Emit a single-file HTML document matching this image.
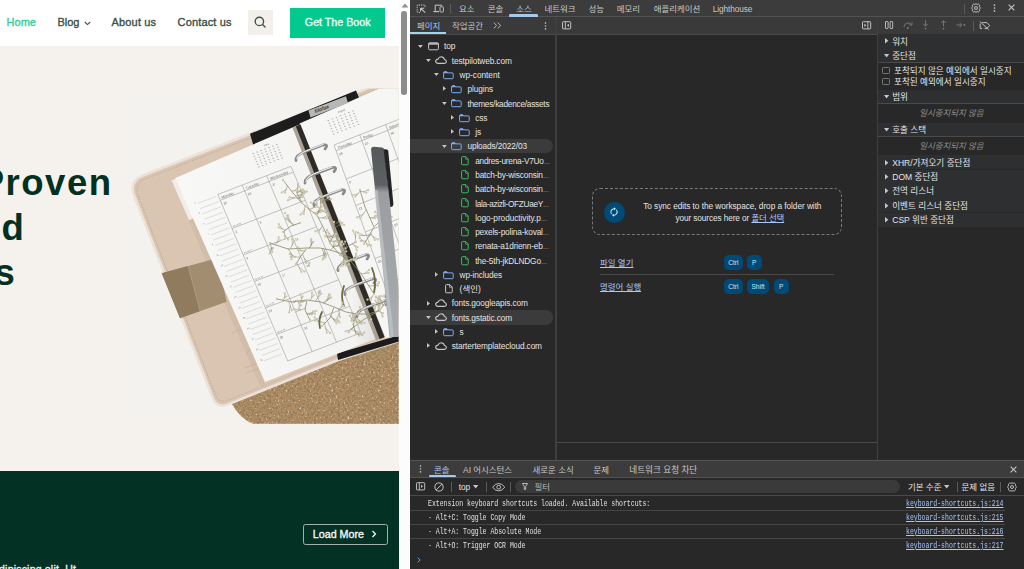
<!DOCTYPE html><html lang="ko"><head><meta charset="utf-8"><title>Productivity</title><style>
*{box-sizing:border-box}
html,body{margin:0;padding:0}
body{width:1024px;height:569px;overflow:hidden;position:relative;background:#282828;font-family:"Liberation Sans","Noto Sans CJK KR",sans-serif}
.a{position:absolute}
.t{position:absolute;white-space:nowrap;height:12px;line-height:12px;color:#e3e3e3}
.l{font-size:8.3px;letter-spacing:-0.12px}
.k{font-size:8.45px}
.k2{font-size:8.58px}
.m{font-family:"Liberation Mono","Noto Sans CJK KR",monospace;font-size:8.8px;transform-origin:0 50%;transform:scaleX(0.7386)}
.nav{position:absolute;white-space:nowrap;font-size:11px;height:14px;line-height:14px;color:#3a4f48;-webkit-text-stroke:0.35px currentColor}
.h1{position:absolute;white-space:nowrap;font-weight:bold;font-size:36.5px;line-height:44px;height:44px;color:#03301f;letter-spacing:-0.3px}
svg{position:absolute;overflow:visible}
.key{position:absolute;background:#004a77;color:#c2e7ff;border-radius:5px;font-size:6.6px;height:15px;line-height:15px;text-align:center}
.lnk{color:#a8c7fa;text-decoration:underline}
</style></head><body>
<div class="a" id="site" style="left:0;top:0;width:399.5px;height:569px;overflow:hidden;background:#f5f2ed">
<svg style="left:0;top:0" width="400" height="569" viewBox="0 0 400 569"><defs><clipPath id="pc"><rect x="128" y="88.4" width="270.6" height="335.4"/></clipPath><filter id="cork" x="0" y="0" width="100%" height="100%"><feTurbulence type="fractalNoise" baseFrequency="0.42" numOctaves="3" seed="7"/><feColorMatrix type="matrix" values="0 0 0 0 0.30  0 0 0 0 0.20  0 0 0 0 0.10  3.2 3.2 0 0 -2.95"/><feComposite in2="SourceGraphic" operator="in"/></filter><filter id="cork2" x="0" y="0" width="100%" height="100%"><feTurbulence type="fractalNoise" baseFrequency="0.5" numOctaves="2" seed="21"/><feColorMatrix type="matrix" values="0 0 0 0 0.80  0 0 0 0 0.68  0 0 0 0 0.50  2.4 2.4 0 0 -2.75"/><feComposite in2="SourceGraphic" operator="in"/></filter><linearGradient id="pg" x1="0" y1="0" x2="1" y2="0"><stop offset="0" stop-color="#f8f8f7"/><stop offset="0.85" stop-color="#f3f3f2"/><stop offset="1" stop-color="#dddcda"/></linearGradient><linearGradient id="pen" x1="0" y1="0" x2="0" y2="1"><stop offset="0" stop-color="#56595b"/><stop offset="0.2" stop-color="#5e6163"/><stop offset="0.24" stop-color="#9b9ea0"/><stop offset="1" stop-color="#a9acae"/></linearGradient><filter id="bl"><feGaussianBlur stdDeviation="0.45"/></filter></defs><g clip-path="url(#pc)"><rect x="128" y="88.4" width="271" height="336" fill="#f4f2ee"/><path d="M228 400 L338 356 L399 336 L399 424 L253 424 Q240 418 232.6 405Z" fill="#b08d65"/><path d="M228 400 L338 356 L399 336 L399 424 L253 424 Q240 418 232.6 405Z" fill="#b3906a" filter="url(#cork)"/><path d="M228 400 L338 356 L399 336 L399 424 L253 424 Q240 418 232.6 405Z" fill="#b3906a" filter="url(#cork2)"/><path d="M399 76 L143.4 175.2 Q128.5 181 134.3 196 L212.6 397.7 Q216.9 408.9 228 404.4 L338 360 L399 341 Z" fill="#dac5b2" stroke="#ebe3d9" stroke-width="2.6" stroke-linejoin="round"/><path d="M399 80.5 L145.5 178.8 Q133.8 183.6 138.2 195.6 L215.4 395 Q219 403.6 227.6 400.4 L338 356 L399 337" fill="none" stroke="#a8957f" stroke-width="0.5" stroke-dasharray="1.6 1.3"/><path d="M172 182 L178 180 L266 386 L261 388Z" fill="#d2bda9" filter="url(#bl)"/><path d="M250 133.8 L356 90.5 L360 100 L253.5 146Z" fill="#1d1d1d"/><path d="M337 353.6 L399 335.2 L399 341.6 L338 360Z" fill="#1b1b1b"/><path d="M232 334 q4 -5 9 -4 M246 355 q3 -7 8 -8 M244 368 l12 -4 M246 373 l12 -4" fill="none" stroke="#cbb39d" stroke-width="1"/><path d="M161.7 273.3 L216.7 258.3 L226.7 301.7 L180 318.3Z" fill="#a38d70"/><path d="M161.7 273.3 L188 266 L200 311 L180 318.3Z" fill="#917b5e"/><path d="M188 266 L200 311" stroke="#cdbca4" stroke-width="0.7" stroke-dasharray="1 1"/><path d="M171.5 180.5 L177 178.3 L194 218 L189 220.3Z" fill="#f1ede6"/><path d="M175.3 178 L299.5 124.5 L383 336 L265 382Z" fill="url(#pg)"/><path d="M299.5 123.6 L379.5 88.4 L400 88 L400 336 L384 338Z" fill="#f6f6f5"/><path d="M308.5 110.5 L346 96.2 L348 102.9 L310.5 117.6Z" fill="#b7b8b6"/><text transform="translate(315 113.4) rotate(-21) skewX(-12)" font-family="Liberation Sans,sans-serif" font-weight="bold" font-size="5.2" fill="#3a3a3a">filofax</text><g filter="url(#bl)"><path d="M217.8 194.5 L291.0 166.3" stroke="#8a8a88" stroke-width="0.5"/><path d="M220.2 200.3 L293.4 172.1" stroke="#8a8a88" stroke-width="0.5"/><path d="M232.1 228.5 L305.3 200.3" stroke="#8a8a88" stroke-width="0.5"/><path d="M243.2 255.0 L316.4 226.8" stroke="#8a8a88" stroke-width="0.5"/><path d="M254.3 281.5 L327.5 253.3" stroke="#8a8a88" stroke-width="0.5"/><path d="M265.4 308.0 L338.6 279.8" stroke="#8a8a88" stroke-width="0.5"/><path d="M276.5 334.5 L349.7 306.3" stroke="#8a8a88" stroke-width="0.5"/><path d="M287.7 361.0 L360.9 332.8" stroke="#8a8a88" stroke-width="0.5"/><path d="M217.8 194.5 L287.7 361.0" stroke="#8a8a88" stroke-width="0.5"/><path d="M242.2 185.1 L312.1 351.6" stroke="#8a8a88" stroke-width="0.5"/><path d="M266.6 175.7 L336.5 342.2" stroke="#8a8a88" stroke-width="0.5"/><path d="M291.0 166.3 L360.9 332.8" stroke="#8a8a88" stroke-width="0.5"/><text transform="translate(221.9 198.8) rotate(-21)" font-family="Liberation Sans,sans-serif" font-size="3.6" fill="#6a6a68">Monday</text><text transform="translate(246.3 189.4) rotate(-21)" font-family="Liberation Sans,sans-serif" font-size="3.6" fill="#6a6a68">Tuesday</text><text transform="translate(270.7 180.0) rotate(-21)" font-family="Liberation Sans,sans-serif" font-size="3.6" fill="#6a6a68">Wednesday</text><text transform="translate(223.9 204.9) rotate(-21)" font-family="Liberation Sans,sans-serif" font-size="3.2" fill="#6a6a68">25</text><text transform="translate(248.3 195.5) rotate(-21)" font-family="Liberation Sans,sans-serif" font-size="3.2" fill="#6a6a68">26</text><text transform="translate(272.7 186.1) rotate(-21)" font-family="Liberation Sans,sans-serif" font-size="3.2" fill="#6a6a68">27</text><text transform="translate(235.7 233.1) rotate(-21)" font-family="Liberation Sans,sans-serif" font-size="3.2" fill="#6a6a68">2</text><text transform="translate(260.1 223.7) rotate(-21)" font-family="Liberation Sans,sans-serif" font-size="3.2" fill="#6a6a68">3</text><text transform="translate(284.5 214.3) rotate(-21)" font-family="Liberation Sans,sans-serif" font-size="3.2" fill="#6a6a68">4</text><text transform="translate(233.0 227.2) rotate(-21)" font-family="Liberation Sans,sans-serif" font-size="2.2" fill="#77777a">Week 26</text><text transform="translate(246.8 259.6) rotate(-21)" font-family="Liberation Sans,sans-serif" font-size="3.2" fill="#6a6a68">9</text><text transform="translate(271.2 250.2) rotate(-21)" font-family="Liberation Sans,sans-serif" font-size="3.2" fill="#6a6a68">10</text><text transform="translate(295.6 240.8) rotate(-21)" font-family="Liberation Sans,sans-serif" font-size="3.2" fill="#6a6a68">11</text><text transform="translate(244.1 253.7) rotate(-21)" font-family="Liberation Sans,sans-serif" font-size="2.2" fill="#77777a">Week 27</text><text transform="translate(258.0 286.1) rotate(-21)" font-family="Liberation Sans,sans-serif" font-size="3.2" fill="#6a6a68">16</text><text transform="translate(282.4 276.7) rotate(-21)" font-family="Liberation Sans,sans-serif" font-size="3.2" fill="#6a6a68">17</text><text transform="translate(306.8 267.3) rotate(-21)" font-family="Liberation Sans,sans-serif" font-size="3.2" fill="#6a6a68">18</text><text transform="translate(255.2 280.2) rotate(-21)" font-family="Liberation Sans,sans-serif" font-size="2.2" fill="#77777a">Week 28</text><text transform="translate(269.1 312.6) rotate(-21)" font-family="Liberation Sans,sans-serif" font-size="3.2" fill="#6a6a68">23</text><text transform="translate(293.5 303.2) rotate(-21)" font-family="Liberation Sans,sans-serif" font-size="3.2" fill="#6a6a68">24</text><text transform="translate(317.9 293.8) rotate(-21)" font-family="Liberation Sans,sans-serif" font-size="3.2" fill="#6a6a68">25</text><text transform="translate(266.3 306.7) rotate(-21)" font-family="Liberation Sans,sans-serif" font-size="2.2" fill="#77777a">Week 29</text><text transform="translate(280.2 339.1) rotate(-21)" font-family="Liberation Sans,sans-serif" font-size="3.2" fill="#6a6a68">30</text><text transform="translate(304.6 329.7) rotate(-21)" font-family="Liberation Sans,sans-serif" font-size="3.2" fill="#6a6a68">31</text><text transform="translate(329.0 320.3) rotate(-21)" font-family="Liberation Sans,sans-serif" font-size="3.2" fill="#6a6a68"></text><text transform="translate(277.4 333.2) rotate(-21)" font-family="Liberation Sans,sans-serif" font-size="2.2" fill="#77777a">Week 30</text><path d="M197.8 203.4 L216.3 196.4" stroke="#a9a9a7" stroke-width="0.35"/><text transform="translate(194.7 203.8) rotate(-21)" font-family="Liberation Sans,sans-serif" font-size="2.2" fill="#77777a">1</text><path d="M200.0 208.7 L218.5 201.7" stroke="#a9a9a7" stroke-width="0.35"/><path d="M202.2 213.9 L220.7 206.9" stroke="#a9a9a7" stroke-width="0.35"/><text transform="translate(199.1 214.3) rotate(-21)" font-family="Liberation Sans,sans-serif" font-size="2.2" fill="#77777a">3</text><path d="M204.4 219.2 L222.9 212.2" stroke="#a9a9a7" stroke-width="0.35"/><path d="M206.6 224.4 L225.1 217.4" stroke="#a9a9a7" stroke-width="0.35"/><text transform="translate(203.5 224.8) rotate(-21)" font-family="Liberation Sans,sans-serif" font-size="2.2" fill="#77777a">5</text><path d="M208.8 229.7 L227.3 222.7" stroke="#a9a9a7" stroke-width="0.35"/><path d="M211.0 234.9 L229.5 227.9" stroke="#a9a9a7" stroke-width="0.35"/><text transform="translate(207.9 235.3) rotate(-21)" font-family="Liberation Sans,sans-serif" font-size="2.2" fill="#77777a">7</text><path d="M213.2 240.2 L231.7 233.2" stroke="#a9a9a7" stroke-width="0.35"/><path d="M215.4 245.4 L233.9 238.4" stroke="#a9a9a7" stroke-width="0.35"/><text transform="translate(212.3 245.8) rotate(-21)" font-family="Liberation Sans,sans-serif" font-size="2.2" fill="#77777a">9</text><path d="M217.6 250.7 L236.1 243.7" stroke="#a9a9a7" stroke-width="0.35"/><path d="M219.8 255.9 L238.3 248.9" stroke="#a9a9a7" stroke-width="0.35"/><text transform="translate(216.7 256.3) rotate(-21)" font-family="Liberation Sans,sans-serif" font-size="2.2" fill="#77777a">11</text><path d="M222.0 261.1 L240.5 254.1" stroke="#a9a9a7" stroke-width="0.35"/><path d="M224.2 266.4 L242.7 259.4" stroke="#a9a9a7" stroke-width="0.35"/><text transform="translate(221.1 266.8) rotate(-21)" font-family="Liberation Sans,sans-serif" font-size="2.2" fill="#77777a">13</text><path d="M226.4 271.6 L244.9 264.6" stroke="#a9a9a7" stroke-width="0.35"/><path d="M228.6 276.9 L247.1 269.9" stroke="#a9a9a7" stroke-width="0.35"/><text transform="translate(225.5 277.3) rotate(-21)" font-family="Liberation Sans,sans-serif" font-size="2.2" fill="#77777a">15</text><path d="M230.8 282.1 L249.3 275.1" stroke="#a9a9a7" stroke-width="0.35"/><path d="M233.0 287.4 L251.5 280.4" stroke="#a9a9a7" stroke-width="0.35"/><text transform="translate(229.9 287.8) rotate(-21)" font-family="Liberation Sans,sans-serif" font-size="2.2" fill="#77777a">17</text><path d="M235.2 292.6 L253.7 285.6" stroke="#a9a9a7" stroke-width="0.35"/><path d="M237.4 297.9 L255.9 290.9" stroke="#a9a9a7" stroke-width="0.35"/><text transform="translate(234.3 298.3) rotate(-21)" font-family="Liberation Sans,sans-serif" font-size="2.2" fill="#77777a">19</text><path d="M239.6 303.1 L258.1 296.1" stroke="#a9a9a7" stroke-width="0.35"/><path d="M241.8 308.4 L260.3 301.4" stroke="#a9a9a7" stroke-width="0.35"/><text transform="translate(238.7 308.8) rotate(-21)" font-family="Liberation Sans,sans-serif" font-size="2.2" fill="#77777a">21</text><path d="M244.0 313.6 L262.5 306.6" stroke="#a9a9a7" stroke-width="0.35"/><path d="M246.2 318.9 L264.7 311.9" stroke="#a9a9a7" stroke-width="0.35"/><text transform="translate(243.1 319.3) rotate(-21)" font-family="Liberation Sans,sans-serif" font-size="2.2" fill="#77777a">23</text><path d="M248.4 324.1 L266.9 317.1" stroke="#a9a9a7" stroke-width="0.35"/><path d="M250.6 329.4 L269.1 322.4" stroke="#a9a9a7" stroke-width="0.35"/><text transform="translate(247.5 329.8) rotate(-21)" font-family="Liberation Sans,sans-serif" font-size="2.2" fill="#77777a">25</text><path d="M252.8 334.6 L271.3 327.6" stroke="#a9a9a7" stroke-width="0.35"/><path d="M255.0 339.9 L273.5 332.9" stroke="#a9a9a7" stroke-width="0.35"/><text transform="translate(251.9 340.3) rotate(-21)" font-family="Liberation Sans,sans-serif" font-size="2.2" fill="#77777a">27</text><path d="M257.2 345.1 L275.7 338.1" stroke="#a9a9a7" stroke-width="0.35"/><path d="M259.4 350.4 L277.9 343.4" stroke="#a9a9a7" stroke-width="0.35"/><text transform="translate(256.3 350.8) rotate(-21)" font-family="Liberation Sans,sans-serif" font-size="2.2" fill="#77777a">29</text><path d="M261.6 355.6 L280.1 348.6" stroke="#a9a9a7" stroke-width="0.35"/><path d="M263.8 360.9 L282.3 353.9" stroke="#a9a9a7" stroke-width="0.35"/><text transform="translate(260.7 361.3) rotate(-21)" font-family="Liberation Sans,sans-serif" font-size="2.2" fill="#77777a">31</text><text transform="translate(264.0 146.5) rotate(-21)" font-family="Liberation Sans,sans-serif" font-size="2.6" fill="#6a6a68">June</text><rect x="252.5" y="153.0" width="1.6" height="1" fill="#b2b2b0"/><rect x="256.4" y="151.5" width="1.6" height="1" fill="#b2b2b0"/><rect x="260.3" y="150.0" width="1.6" height="1" fill="#b2b2b0"/><rect x="264.2" y="148.5" width="1.6" height="1" fill="#b2b2b0"/><rect x="268.1" y="147.0" width="1.6" height="1" fill="#b2b2b0"/><rect x="272.0" y="145.5" width="1.6" height="1" fill="#b2b2b0"/><rect x="275.9" y="144.0" width="1.6" height="1" fill="#b2b2b0"/><rect x="253.6" y="155.7" width="1.6" height="1" fill="#b2b2b0"/><rect x="257.5" y="154.2" width="1.6" height="1" fill="#b2b2b0"/><rect x="261.4" y="152.7" width="1.6" height="1" fill="#b2b2b0"/><rect x="265.3" y="151.2" width="1.6" height="1" fill="#b2b2b0"/><rect x="269.2" y="149.7" width="1.6" height="1" fill="#b2b2b0"/><rect x="273.1" y="148.2" width="1.6" height="1" fill="#b2b2b0"/><rect x="277.0" y="146.7" width="1.6" height="1" fill="#b2b2b0"/><rect x="254.7" y="158.4" width="1.6" height="1" fill="#b2b2b0"/><rect x="258.6" y="156.9" width="1.6" height="1" fill="#b2b2b0"/><rect x="262.5" y="155.4" width="1.6" height="1" fill="#b2b2b0"/><rect x="266.4" y="153.9" width="1.6" height="1" fill="#b2b2b0"/><rect x="270.3" y="152.4" width="1.6" height="1" fill="#b2b2b0"/><rect x="274.2" y="150.9" width="1.6" height="1" fill="#b2b2b0"/><rect x="278.1" y="149.4" width="1.6" height="1" fill="#b2b2b0"/><rect x="255.7" y="161.1" width="1.6" height="1" fill="#b2b2b0"/><rect x="259.6" y="159.6" width="1.6" height="1" fill="#b2b2b0"/><rect x="263.5" y="158.1" width="1.6" height="1" fill="#b2b2b0"/><rect x="267.4" y="156.6" width="1.6" height="1" fill="#b2b2b0"/><rect x="271.3" y="155.1" width="1.6" height="1" fill="#b2b2b0"/><rect x="275.2" y="153.6" width="1.6" height="1" fill="#b2b2b0"/><rect x="279.1" y="152.1" width="1.6" height="1" fill="#b2b2b0"/><rect x="256.8" y="163.8" width="1.6" height="1" fill="#b2b2b0"/><rect x="260.7" y="162.3" width="1.6" height="1" fill="#b2b2b0"/><rect x="264.6" y="160.8" width="1.6" height="1" fill="#b2b2b0"/><rect x="268.5" y="159.3" width="1.6" height="1" fill="#b2b2b0"/><rect x="272.4" y="157.8" width="1.6" height="1" fill="#b2b2b0"/><rect x="276.3" y="156.3" width="1.6" height="1" fill="#b2b2b0"/><rect x="280.2" y="154.8" width="1.6" height="1" fill="#b2b2b0"/><rect x="257.9" y="166.5" width="1.6" height="1" fill="#b2b2b0"/><rect x="261.8" y="165.0" width="1.6" height="1" fill="#b2b2b0"/><rect x="265.7" y="163.5" width="1.6" height="1" fill="#b2b2b0"/><rect x="269.6" y="162.0" width="1.6" height="1" fill="#b2b2b0"/><rect x="273.5" y="160.5" width="1.6" height="1" fill="#b2b2b0"/><rect x="277.4" y="159.0" width="1.6" height="1" fill="#b2b2b0"/><rect x="281.3" y="157.5" width="1.6" height="1" fill="#b2b2b0"/><path d="M334.0 145.0 L411.4 114.4" stroke="#8a8a88" stroke-width="0.5"/><path d="M336.1 150.8 L413.5 120.2" stroke="#8a8a88" stroke-width="0.5"/><path d="M346.2 179.0 L423.6 148.4" stroke="#8a8a88" stroke-width="0.5"/><path d="M355.8 205.5 L433.2 174.9" stroke="#8a8a88" stroke-width="0.5"/><path d="M365.3 232.0 L442.7 201.4" stroke="#8a8a88" stroke-width="0.5"/><path d="M374.9 258.5 L452.3 227.9" stroke="#8a8a88" stroke-width="0.5"/><path d="M384.4 285.0 L461.8 254.4" stroke="#8a8a88" stroke-width="0.5"/><path d="M393.9 311.5 L471.3 280.9" stroke="#8a8a88" stroke-width="0.5"/><path d="M334.0 145.0 L393.9 311.5" stroke="#8a8a88" stroke-width="0.5"/><path d="M359.8 134.8 L419.7 301.3" stroke="#8a8a88" stroke-width="0.5"/><path d="M385.6 124.6 L445.5 291.1" stroke="#8a8a88" stroke-width="0.5"/><text transform="translate(337.9 149.3) rotate(-21)" font-family="Liberation Sans,sans-serif" font-size="3.6" fill="#6a6a68">Thursday</text><text transform="translate(363.7 139.1) rotate(-21)" font-family="Liberation Sans,sans-serif" font-size="3.6" fill="#6a6a68">Friday</text><text transform="translate(389.5 128.9) rotate(-21)" font-family="Liberation Sans,sans-serif" font-size="3.6" fill="#6a6a68">Saturday</text><text transform="translate(339.5 155.4) rotate(-21)" font-family="Liberation Sans,sans-serif" font-size="3.2" fill="#6a6a68">28</text><text transform="translate(365.3 145.2) rotate(-21)" font-family="Liberation Sans,sans-serif" font-size="3.2" fill="#6a6a68">29</text><text transform="translate(391.1 135.0) rotate(-21)" font-family="Liberation Sans,sans-serif" font-size="3.2" fill="#6a6a68">30</text><text transform="translate(349.7 183.6) rotate(-21)" font-family="Liberation Sans,sans-serif" font-size="3.2" fill="#6a6a68">5</text><text transform="translate(375.5 173.4) rotate(-21)" font-family="Liberation Sans,sans-serif" font-size="3.2" fill="#6a6a68">6</text><text transform="translate(401.3 163.2) rotate(-21)" font-family="Liberation Sans,sans-serif" font-size="3.2" fill="#6a6a68">7</text><text transform="translate(359.2 210.1) rotate(-21)" font-family="Liberation Sans,sans-serif" font-size="3.2" fill="#6a6a68">12</text><text transform="translate(385.0 199.9) rotate(-21)" font-family="Liberation Sans,sans-serif" font-size="3.2" fill="#6a6a68">13</text><text transform="translate(410.8 189.7) rotate(-21)" font-family="Liberation Sans,sans-serif" font-size="3.2" fill="#6a6a68">14</text><text transform="translate(368.7 236.6) rotate(-21)" font-family="Liberation Sans,sans-serif" font-size="3.2" fill="#6a6a68">19</text><text transform="translate(394.5 226.4) rotate(-21)" font-family="Liberation Sans,sans-serif" font-size="3.2" fill="#6a6a68">20</text><text transform="translate(420.3 216.2) rotate(-21)" font-family="Liberation Sans,sans-serif" font-size="3.2" fill="#6a6a68">21</text><text transform="translate(378.3 263.1) rotate(-21)" font-family="Liberation Sans,sans-serif" font-size="3.2" fill="#6a6a68">26</text><text transform="translate(404.1 252.9) rotate(-21)" font-family="Liberation Sans,sans-serif" font-size="3.2" fill="#6a6a68">27</text><text transform="translate(429.9 242.7) rotate(-21)" font-family="Liberation Sans,sans-serif" font-size="3.2" fill="#6a6a68">28</text><text transform="translate(338.0 113.2) rotate(-21)" font-family="Liberation Sans,sans-serif" font-size="2.6" fill="#6a6a68">August</text><rect x="327.5" y="120.0" width="1.6" height="1" fill="#b2b2b0"/><rect x="331.6" y="118.4" width="1.6" height="1" fill="#b2b2b0"/><rect x="335.7" y="116.8" width="1.6" height="1" fill="#b2b2b0"/><rect x="339.8" y="115.2" width="1.6" height="1" fill="#b2b2b0"/><rect x="343.9" y="113.6" width="1.6" height="1" fill="#b2b2b0"/><rect x="348.0" y="112.0" width="1.6" height="1" fill="#b2b2b0"/><rect x="352.1" y="110.4" width="1.6" height="1" fill="#b2b2b0"/><rect x="328.6" y="122.7" width="1.6" height="1" fill="#b2b2b0"/><rect x="332.7" y="121.1" width="1.6" height="1" fill="#b2b2b0"/><rect x="336.8" y="119.5" width="1.6" height="1" fill="#b2b2b0"/><rect x="340.9" y="117.9" width="1.6" height="1" fill="#b2b2b0"/><rect x="345.0" y="116.3" width="1.6" height="1" fill="#b2b2b0"/><rect x="349.1" y="114.7" width="1.6" height="1" fill="#b2b2b0"/><rect x="353.2" y="113.1" width="1.6" height="1" fill="#b2b2b0"/><rect x="329.7" y="125.4" width="1.6" height="1" fill="#b2b2b0"/><rect x="333.8" y="123.8" width="1.6" height="1" fill="#b2b2b0"/><rect x="337.9" y="122.2" width="1.6" height="1" fill="#b2b2b0"/><rect x="342.0" y="120.6" width="1.6" height="1" fill="#b2b2b0"/><rect x="346.1" y="119.0" width="1.6" height="1" fill="#b2b2b0"/><rect x="350.2" y="117.4" width="1.6" height="1" fill="#b2b2b0"/><rect x="354.3" y="115.8" width="1.6" height="1" fill="#b2b2b0"/><rect x="330.7" y="128.1" width="1.6" height="1" fill="#b2b2b0"/><rect x="334.8" y="126.5" width="1.6" height="1" fill="#b2b2b0"/><rect x="338.9" y="124.9" width="1.6" height="1" fill="#b2b2b0"/><rect x="343.0" y="123.3" width="1.6" height="1" fill="#b2b2b0"/><rect x="347.1" y="121.7" width="1.6" height="1" fill="#b2b2b0"/><rect x="351.2" y="120.1" width="1.6" height="1" fill="#b2b2b0"/><rect x="355.3" y="118.5" width="1.6" height="1" fill="#b2b2b0"/><rect x="331.8" y="130.8" width="1.6" height="1" fill="#b2b2b0"/><rect x="335.9" y="129.2" width="1.6" height="1" fill="#b2b2b0"/><rect x="340.0" y="127.6" width="1.6" height="1" fill="#b2b2b0"/><rect x="344.1" y="126.0" width="1.6" height="1" fill="#b2b2b0"/><rect x="348.2" y="124.4" width="1.6" height="1" fill="#b2b2b0"/><rect x="352.3" y="122.8" width="1.6" height="1" fill="#b2b2b0"/><rect x="356.4" y="121.2" width="1.6" height="1" fill="#b2b2b0"/><rect x="332.9" y="133.5" width="1.6" height="1" fill="#b2b2b0"/><rect x="337.0" y="131.9" width="1.6" height="1" fill="#b2b2b0"/><rect x="341.1" y="130.3" width="1.6" height="1" fill="#b2b2b0"/><rect x="345.2" y="128.7" width="1.6" height="1" fill="#b2b2b0"/><rect x="349.3" y="127.1" width="1.6" height="1" fill="#b2b2b0"/><rect x="353.4" y="125.5" width="1.6" height="1" fill="#b2b2b0"/><rect x="357.5" y="123.9" width="1.6" height="1" fill="#b2b2b0"/></g><path d="M292.5 127.8 L300.5 124.3 L385 337 L376 340.5Z" fill="#a9a196"/><path d="M295.8 126.3 L300.4 124.4 L384.6 337.2 L379.6 339Z" fill="#2e2a25"/><path d="M296 160.5 Q295 155 307 151 L323 145 Q329 144 325 149" fill="none" stroke="#8a8a8a" stroke-width="2.8" stroke-linecap="round"/><path d="M297 159 Q297 154.5 307 150.4 L323 144.4" fill="none" stroke="#ededed" stroke-width="1.1" stroke-linecap="round"/><path d="M305 183.1 Q304 177.6 316 173.6 L332 167.6 Q338 166.6 334 171.6" fill="none" stroke="#8a8a8a" stroke-width="2.8" stroke-linecap="round"/><path d="M306 181.6 Q306 177.1 316 173.0 L332 167.0" fill="none" stroke="#ededed" stroke-width="1.1" stroke-linecap="round"/><path d="M314 205.5 Q313 200 325 196 L341 190 Q347 189 343 194" fill="none" stroke="#8a8a8a" stroke-width="2.8" stroke-linecap="round"/><path d="M315 204 Q315 199.5 325 195.4 L341 189.4" fill="none" stroke="#ededed" stroke-width="1.1" stroke-linecap="round"/><path d="M338 270.5 Q337 265 349 261 L365 255 Q371 254 367 259" fill="none" stroke="#8a8a8a" stroke-width="2.8" stroke-linecap="round"/><path d="M339 269 Q339 264.5 349 260.4 L365 254.4" fill="none" stroke="#ededed" stroke-width="1.1" stroke-linecap="round"/><path d="M345 294.5 Q344 289 356 285 L372 279 Q378 278 374 283" fill="none" stroke="#8a8a8a" stroke-width="2.8" stroke-linecap="round"/><path d="M346 293 Q346 288.5 356 284.4 L372 278.4" fill="none" stroke="#ededed" stroke-width="1.1" stroke-linecap="round"/><path d="M357 316.5 Q356 311 368 307 L384 301 Q390 300 386 305" fill="none" stroke="#8a8a8a" stroke-width="2.8" stroke-linecap="round"/><path d="M358 315 Q358 310.5 368 306.4 L384 300.4" fill="none" stroke="#ededed" stroke-width="1.1" stroke-linecap="round"/><path d="M283.0 180.0 L293.0 193.0 L302.0 203.0 L310.0 210.0 L317.0 215.0 L324.0 229.0 L330.0 243.0 L340.0 255.0 L350.0 260.0 L362.0 275.0 L374.0 294.0" fill="none" stroke="#8f8a68" stroke-width="0.8" stroke-linecap="round" stroke-linejoin="round"/><path d="M287.5 185.9 L284.9 192.7" stroke="#8f8a68" stroke-width="0.55" stroke-linecap="round"/><path d="M286.2 189.3 L281.7 192.6" stroke="#8f8a68" stroke-width="0.5" stroke-linecap="round"/><path d="M291.6 191.1 L297.3 190.5" stroke="#8f8a68" stroke-width="0.55" stroke-linecap="round"/><path d="M294.4 190.8 L298.0 187.3" stroke="#8f8a68" stroke-width="0.5" stroke-linecap="round"/><path d="M297.6 198.1 L302.7 197.1" stroke="#8f8a68" stroke-width="0.55" stroke-linecap="round"/><path d="M300.2 197.6 L303.2 194.0" stroke="#8f8a68" stroke-width="0.5" stroke-linecap="round"/><path d="M295.7 196.0 L303.4 194.5" stroke="#8f8a68" stroke-width="0.55" stroke-linecap="round"/><path d="M299.6 195.3 L303.9 191.4" stroke="#8f8a68" stroke-width="0.5" stroke-linecap="round"/><path d="M309.1 209.2 L316.9 206.7" stroke="#8f8a68" stroke-width="0.55" stroke-linecap="round"/><path d="M313.0 208.0 L317.0 203.5" stroke="#8f8a68" stroke-width="0.5" stroke-linecap="round"/><path d="M305.2 205.8 L303.7 214.1" stroke="#8f8a68" stroke-width="0.55" stroke-linecap="round"/><path d="M304.4 209.9 L300.5 214.7" stroke="#8f8a68" stroke-width="0.5" stroke-linecap="round"/><path d="M314.3 213.1 L321.9 209.8" stroke="#8f8a68" stroke-width="0.55" stroke-linecap="round"/><path d="M318.1 211.4 L321.7 206.6" stroke="#8f8a68" stroke-width="0.5" stroke-linecap="round"/><path d="M315.8 214.2 L320.4 212.2" stroke="#8f8a68" stroke-width="0.55" stroke-linecap="round"/><path d="M318.1 213.2 L320.2 209.0" stroke="#8f8a68" stroke-width="0.5" stroke-linecap="round"/><path d="M318.3 217.7 L326.5 218.3" stroke="#8f8a68" stroke-width="0.55" stroke-linecap="round"/><path d="M322.4 218.0 L327.8 215.4" stroke="#8f8a68" stroke-width="0.5" stroke-linecap="round"/><path d="M322.4 225.9 L318.6 232.0" stroke="#8f8a68" stroke-width="0.55" stroke-linecap="round"/><path d="M320.5 228.9 L315.4 231.3" stroke="#8f8a68" stroke-width="0.5" stroke-linecap="round"/><path d="M329.1 240.8 L337.4 241.9" stroke="#8f8a68" stroke-width="0.55" stroke-linecap="round"/><path d="M333.2 241.4 L338.9 239.1" stroke="#8f8a68" stroke-width="0.5" stroke-linecap="round"/><path d="M327.0 236.0 L334.3 237.0" stroke="#8f8a68" stroke-width="0.55" stroke-linecap="round"/><path d="M330.6 236.5 L335.8 234.2" stroke="#8f8a68" stroke-width="0.5" stroke-linecap="round"/><path d="M332.8 246.3 L341.5 245.0" stroke="#8f8a68" stroke-width="0.55" stroke-linecap="round"/><path d="M337.1 245.7 L342.1 241.8" stroke="#8f8a68" stroke-width="0.5" stroke-linecap="round"/><path d="M333.2 246.8 L340.7 245.6" stroke="#8f8a68" stroke-width="0.55" stroke-linecap="round"/><path d="M336.9 246.2 L341.4 242.5" stroke="#8f8a68" stroke-width="0.5" stroke-linecap="round"/><path d="M340.3 255.1 L346.2 251.4" stroke="#8f8a68" stroke-width="0.55" stroke-linecap="round"/><path d="M343.3 253.3 L345.5 248.3" stroke="#8f8a68" stroke-width="0.5" stroke-linecap="round"/><path d="M348.5 259.2 L348.9 264.3" stroke="#8f8a68" stroke-width="0.55" stroke-linecap="round"/><path d="M348.7 261.8 L345.9 265.6" stroke="#8f8a68" stroke-width="0.5" stroke-linecap="round"/><path d="M350.2 260.3 L356.1 259.5" stroke="#8f8a68" stroke-width="0.55" stroke-linecap="round"/><path d="M353.1 259.9 L356.8 256.3" stroke="#8f8a68" stroke-width="0.5" stroke-linecap="round"/><path d="M361.1 273.9 L368.5 272.9" stroke="#8f8a68" stroke-width="0.55" stroke-linecap="round"/><path d="M364.8 273.4 L369.2 269.8" stroke="#8f8a68" stroke-width="0.5" stroke-linecap="round"/><path d="M373.8 293.6 L370.6 300.0" stroke="#8f8a68" stroke-width="0.55" stroke-linecap="round"/><path d="M372.2 296.8 L367.4 299.6" stroke="#8f8a68" stroke-width="0.5" stroke-linecap="round"/><path d="M368.8 285.8 L378.0 285.5" stroke="#8f8a68" stroke-width="0.55" stroke-linecap="round"/><path d="M373.4 285.7 L379.0 282.5" stroke="#8f8a68" stroke-width="0.5" stroke-linecap="round"/><path d="M270.0 243.0 L288.0 249.0 L307.0 248.0 L320.0 248.0 L330.0 250.0 L343.0 254.0 L354.0 260.0" fill="none" stroke="#8f8a68" stroke-width="0.8" stroke-linecap="round" stroke-linejoin="round"/><path d="M274.9 244.6 L279.8 240.4" stroke="#8f8a68" stroke-width="0.55" stroke-linecap="round"/><path d="M277.3 242.5 L278.7 237.4" stroke="#8f8a68" stroke-width="0.5" stroke-linecap="round"/><path d="M270.3 243.1 L272.2 252.0" stroke="#8f8a68" stroke-width="0.55" stroke-linecap="round"/><path d="M271.3 247.5 L269.6 253.7" stroke="#8f8a68" stroke-width="0.5" stroke-linecap="round"/><path d="M290.2 248.9 L294.4 241.1" stroke="#8f8a68" stroke-width="0.55" stroke-linecap="round"/><path d="M292.3 245.0 L292.2 238.7" stroke="#8f8a68" stroke-width="0.5" stroke-linecap="round"/><path d="M288.2 249.0 L293.4 256.7" stroke="#8f8a68" stroke-width="0.55" stroke-linecap="round"/><path d="M290.8 252.9 L291.5 259.3" stroke="#8f8a68" stroke-width="0.5" stroke-linecap="round"/><path d="M309.3 248.0 L313.1 241.8" stroke="#8f8a68" stroke-width="0.55" stroke-linecap="round"/><path d="M311.2 244.9 L311.1 239.3" stroke="#8f8a68" stroke-width="0.5" stroke-linecap="round"/><path d="M309.5 248.0 L313.1 241.9" stroke="#8f8a68" stroke-width="0.55" stroke-linecap="round"/><path d="M311.3 245.0 L311.1 239.4" stroke="#8f8a68" stroke-width="0.5" stroke-linecap="round"/><path d="M323.8 248.8 L326.2 255.5" stroke="#8f8a68" stroke-width="0.55" stroke-linecap="round"/><path d="M325.0 252.1 L323.8 257.5" stroke="#8f8a68" stroke-width="0.5" stroke-linecap="round"/><path d="M322.1 248.4 L325.4 257.6" stroke="#8f8a68" stroke-width="0.55" stroke-linecap="round"/><path d="M323.8 253.0 L322.9 259.6" stroke="#8f8a68" stroke-width="0.5" stroke-linecap="round"/><path d="M342.7 253.9 L345.2 264.1" stroke="#8f8a68" stroke-width="0.55" stroke-linecap="round"/><path d="M343.9 259.0 L342.5 265.9" stroke="#8f8a68" stroke-width="0.5" stroke-linecap="round"/><path d="M330.3 250.1 L335.4 245.4" stroke="#8f8a68" stroke-width="0.55" stroke-linecap="round"/><path d="M332.8 247.8 L334.3 242.4" stroke="#8f8a68" stroke-width="0.5" stroke-linecap="round"/><path d="M352.4 259.1 L356.6 256.6" stroke="#8f8a68" stroke-width="0.55" stroke-linecap="round"/><path d="M354.5 257.9 L356.1 253.5" stroke="#8f8a68" stroke-width="0.5" stroke-linecap="round"/><path d="M344.6 254.9 L344.9 261.0" stroke="#8f8a68" stroke-width="0.55" stroke-linecap="round"/><path d="M344.7 258.0 L341.9 262.3" stroke="#8f8a68" stroke-width="0.5" stroke-linecap="round"/><path d="M277.0 299.0 L292.0 302.0 L307.0 300.0 L321.0 302.0 L334.0 307.0 L346.0 312.0 L357.0 314.0 L369.0 314.0 L380.0 310.0" fill="none" stroke="#8f8a68" stroke-width="0.8" stroke-linecap="round" stroke-linejoin="round"/><path d="M288.6 301.3 L291.8 310.3" stroke="#8f8a68" stroke-width="0.55" stroke-linecap="round"/><path d="M290.2 305.8 L289.3 312.3" stroke="#8f8a68" stroke-width="0.5" stroke-linecap="round"/><path d="M282.8 300.2 L286.3 296.3" stroke="#8f8a68" stroke-width="0.55" stroke-linecap="round"/><path d="M284.5 298.2 L284.8 293.5" stroke="#8f8a68" stroke-width="0.5" stroke-linecap="round"/><path d="M300.7 300.8 L302.6 296.5" stroke="#8f8a68" stroke-width="0.55" stroke-linecap="round"/><path d="M301.7 298.7 L300.3 294.3" stroke="#8f8a68" stroke-width="0.5" stroke-linecap="round"/><path d="M297.5 301.3 L300.9 305.5" stroke="#8f8a68" stroke-width="0.55" stroke-linecap="round"/><path d="M299.2 303.4 L299.2 308.2" stroke="#8f8a68" stroke-width="0.5" stroke-linecap="round"/><path d="M315.2 301.2 L321.3 293.6" stroke="#8f8a68" stroke-width="0.55" stroke-linecap="round"/><path d="M318.3 297.4 L319.7 290.9" stroke="#8f8a68" stroke-width="0.5" stroke-linecap="round"/><path d="M309.6 300.4 L313.6 295.3" stroke="#8f8a68" stroke-width="0.55" stroke-linecap="round"/><path d="M311.6 297.9 L312.0 292.6" stroke="#8f8a68" stroke-width="0.5" stroke-linecap="round"/><path d="M324.0 303.1 L331.0 297.7" stroke="#8f8a68" stroke-width="0.55" stroke-linecap="round"/><path d="M327.5 300.4 L330.0 294.6" stroke="#8f8a68" stroke-width="0.5" stroke-linecap="round"/><path d="M323.1 302.8 L329.9 297.5" stroke="#8f8a68" stroke-width="0.55" stroke-linecap="round"/><path d="M326.5 300.1 L328.9 294.4" stroke="#8f8a68" stroke-width="0.5" stroke-linecap="round"/><path d="M338.7 308.9 L339.8 317.0" stroke="#8f8a68" stroke-width="0.55" stroke-linecap="round"/><path d="M339.3 313.0 L337.0 318.6" stroke="#8f8a68" stroke-width="0.5" stroke-linecap="round"/><path d="M339.1 309.1 L343.3 306.0" stroke="#8f8a68" stroke-width="0.55" stroke-linecap="round"/><path d="M341.2 307.5 L342.4 302.9" stroke="#8f8a68" stroke-width="0.5" stroke-linecap="round"/><path d="M351.6 313.0 L353.8 318.7" stroke="#8f8a68" stroke-width="0.55" stroke-linecap="round"/><path d="M352.7 315.9 L351.4 320.8" stroke="#8f8a68" stroke-width="0.5" stroke-linecap="round"/><path d="M353.8 313.4 L356.3 320.1" stroke="#8f8a68" stroke-width="0.55" stroke-linecap="round"/><path d="M355.0 316.7 L353.8 322.2" stroke="#8f8a68" stroke-width="0.5" stroke-linecap="round"/><path d="M367.9 314.0 L371.1 319.5" stroke="#8f8a68" stroke-width="0.55" stroke-linecap="round"/><path d="M369.5 316.7 L369.1 322.0" stroke="#8f8a68" stroke-width="0.5" stroke-linecap="round"/><path d="M359.1 314.0 L361.9 309.4" stroke="#8f8a68" stroke-width="0.55" stroke-linecap="round"/><path d="M360.5 311.7 L359.9 306.9" stroke="#8f8a68" stroke-width="0.5" stroke-linecap="round"/><path d="M374.3 312.1 L375.5 305.9" stroke="#8f8a68" stroke-width="0.55" stroke-linecap="round"/><path d="M374.9 309.0 L372.7 304.2" stroke="#8f8a68" stroke-width="0.5" stroke-linecap="round"/><path d="M379.1 310.3 L380.8 301.5" stroke="#8f8a68" stroke-width="0.55" stroke-linecap="round"/><path d="M380.0 305.9 L378.1 299.8" stroke="#8f8a68" stroke-width="0.5" stroke-linecap="round"/><path d="M360.0 190.0 L365.0 207.0 L374.0 227.0 L369.0 236.0 L364.0 244.0" fill="none" stroke="#8f8a68" stroke-width="0.8" stroke-linecap="round" stroke-linejoin="round"/><path d="M360.3 191.2 L355.4 196.5" stroke="#8f8a68" stroke-width="0.55" stroke-linecap="round"/><path d="M357.9 193.8 L352.5 195.3" stroke="#8f8a68" stroke-width="0.5" stroke-linecap="round"/><path d="M360.3 191.0 L366.4 192.6" stroke="#8f8a68" stroke-width="0.55" stroke-linecap="round"/><path d="M363.4 191.8 L368.2 190.0" stroke="#8f8a68" stroke-width="0.5" stroke-linecap="round"/><path d="M369.8 217.6 L374.9 218.2" stroke="#8f8a68" stroke-width="0.55" stroke-linecap="round"/><path d="M372.4 217.9 L376.4 215.4" stroke="#8f8a68" stroke-width="0.5" stroke-linecap="round"/><path d="M366.2 209.8 L360.3 218.3" stroke="#8f8a68" stroke-width="0.55" stroke-linecap="round"/><path d="M363.3 214.0 L357.2 217.5" stroke="#8f8a68" stroke-width="0.5" stroke-linecap="round"/><path d="M370.7 232.9 L374.8 239.9" stroke="#8f8a68" stroke-width="0.55" stroke-linecap="round"/><path d="M372.7 236.4 L377.9 239.4" stroke="#8f8a68" stroke-width="0.5" stroke-linecap="round"/><path d="M369.4 235.3 L359.4 235.6" stroke="#8f8a68" stroke-width="0.55" stroke-linecap="round"/><path d="M364.4 235.5 L358.2 232.7" stroke="#8f8a68" stroke-width="0.5" stroke-linecap="round"/><path d="M365.5 241.6 L367.7 245.9" stroke="#8f8a68" stroke-width="0.55" stroke-linecap="round"/><path d="M366.6 243.7 L370.9 245.5" stroke="#8f8a68" stroke-width="0.5" stroke-linecap="round"/><path d="M365.8 241.1 L360.8 241.0" stroke="#8f8a68" stroke-width="0.55" stroke-linecap="round"/><path d="M363.3 241.0 L359.7 238.0" stroke="#8f8a68" stroke-width="0.5" stroke-linecap="round"/><path d="M350.0 330.0 L363.0 320.0 L380.0 310.0 L387.0 300.0 L392.0 290.0" fill="none" stroke="#8f8a68" stroke-width="0.8" stroke-linecap="round" stroke-linejoin="round"/><path d="M354.0 326.9 L352.8 316.5" stroke="#8f8a68" stroke-width="0.55" stroke-linecap="round"/><path d="M353.4 321.7 L349.7 315.7" stroke="#8f8a68" stroke-width="0.5" stroke-linecap="round"/><path d="M351.0 329.2 L359.3 332.5" stroke="#8f8a68" stroke-width="0.55" stroke-linecap="round"/><path d="M355.1 330.9 L359.3 335.7" stroke="#8f8a68" stroke-width="0.5" stroke-linecap="round"/><path d="M378.3 311.0 L378.4 301.7" stroke="#8f8a68" stroke-width="0.55" stroke-linecap="round"/><path d="M378.3 306.4 L375.4 300.6" stroke="#8f8a68" stroke-width="0.5" stroke-linecap="round"/><path d="M378.6 310.8 L383.1 313.3" stroke="#8f8a68" stroke-width="0.55" stroke-linecap="round"/><path d="M380.8 312.1 L382.6 316.5" stroke="#8f8a68" stroke-width="0.5" stroke-linecap="round"/><path d="M383.3 305.3 L379.3 296.4" stroke="#8f8a68" stroke-width="0.55" stroke-linecap="round"/><path d="M381.3 300.8 L376.1 296.6" stroke="#8f8a68" stroke-width="0.5" stroke-linecap="round"/><path d="M382.9 305.8 L379.0 297.0" stroke="#8f8a68" stroke-width="0.55" stroke-linecap="round"/><path d="M380.9 301.4 L375.8 297.2" stroke="#8f8a68" stroke-width="0.5" stroke-linecap="round"/><path d="M389.9 294.3 L396.7 293.7" stroke="#8f8a68" stroke-width="0.55" stroke-linecap="round"/><path d="M393.3 294.0 L398.1 296.7" stroke="#8f8a68" stroke-width="0.5" stroke-linecap="round"/><path d="M387.1 299.9 L384.3 295.5" stroke="#8f8a68" stroke-width="0.55" stroke-linecap="round"/><path d="M385.7 297.7 L381.2 296.2" stroke="#8f8a68" stroke-width="0.5" stroke-linecap="round"/><path d="M300.0 223.0 L291.0 226.0 L283.0 232.0" fill="none" stroke="#8f8a68" stroke-width="0.8" stroke-linecap="round" stroke-linejoin="round"/><path d="M294.2 224.9 L286.8 218.5" stroke="#8f8a68" stroke-width="0.55" stroke-linecap="round"/><path d="M290.5 221.7 L287.9 215.5" stroke="#8f8a68" stroke-width="0.5" stroke-linecap="round"/><path d="M293.4 225.2 L285.8 218.6" stroke="#8f8a68" stroke-width="0.55" stroke-linecap="round"/><path d="M289.6 221.9 L286.9 215.6" stroke="#8f8a68" stroke-width="0.5" stroke-linecap="round"/><path d="M285.4 230.2 L278.7 227.4" stroke="#8f8a68" stroke-width="0.55" stroke-linecap="round"/><path d="M282.1 228.8 L278.8 224.2" stroke="#8f8a68" stroke-width="0.5" stroke-linecap="round"/><path d="M284.3 231.0 L285.1 238.7" stroke="#8f8a68" stroke-width="0.55" stroke-linecap="round"/><path d="M284.7 234.9 L288.2 239.5" stroke="#8f8a68" stroke-width="0.5" stroke-linecap="round"/><path d="M302.0 203.0 L297.0 193.0 L298.0 184.0" fill="none" stroke="#8f8a68" stroke-width="0.8" stroke-linecap="round" stroke-linejoin="round"/><path d="M299.4 197.9 L303.8 191.0" stroke="#8f8a68" stroke-width="0.55" stroke-linecap="round"/><path d="M301.6 194.4 L306.9 191.6" stroke="#8f8a68" stroke-width="0.5" stroke-linecap="round"/><path d="M299.6 198.2 L289.4 197.4" stroke="#8f8a68" stroke-width="0.55" stroke-linecap="round"/><path d="M294.5 197.8 L288.0 200.3" stroke="#8f8a68" stroke-width="0.5" stroke-linecap="round"/><path d="M297.1 192.0 L302.7 189.4" stroke="#8f8a68" stroke-width="0.55" stroke-linecap="round"/><path d="M299.9 190.7 L305.0 191.7" stroke="#8f8a68" stroke-width="0.5" stroke-linecap="round"/><path d="M297.0 192.9 L302.0 190.6" stroke="#8f8a68" stroke-width="0.55" stroke-linecap="round"/><path d="M299.5 191.8 L304.3 192.9" stroke="#8f8a68" stroke-width="0.5" stroke-linecap="round"/><path d="M317.0 215.0 L321.0 205.0 L320.0 196.0" fill="none" stroke="#8f8a68" stroke-width="0.8" stroke-linecap="round" stroke-linejoin="round"/><path d="M319.4 208.9 L314.0 201.7" stroke="#8f8a68" stroke-width="0.55" stroke-linecap="round"/><path d="M316.7 205.3 L310.9 202.6" stroke="#8f8a68" stroke-width="0.5" stroke-linecap="round"/><path d="M318.4 211.6 L325.8 210.4" stroke="#8f8a68" stroke-width="0.55" stroke-linecap="round"/><path d="M322.1 211.0 L327.4 213.2" stroke="#8f8a68" stroke-width="0.5" stroke-linecap="round"/><path d="M320.8 202.8 L327.6 197.6" stroke="#8f8a68" stroke-width="0.55" stroke-linecap="round"/><path d="M324.2 200.2 L330.3 199.4" stroke="#8f8a68" stroke-width="0.5" stroke-linecap="round"/><path d="M320.8 203.2 L328.2 197.5" stroke="#8f8a68" stroke-width="0.55" stroke-linecap="round"/><path d="M324.5 200.4 L330.9 199.3" stroke="#8f8a68" stroke-width="0.5" stroke-linecap="round"/><path d="M307.0 248.0 L301.0 256.0 L296.0 264.0" fill="none" stroke="#8f8a68" stroke-width="0.8" stroke-linecap="round" stroke-linejoin="round"/><path d="M302.5 254.0 L306.2 263.1" stroke="#8f8a68" stroke-width="0.55" stroke-linecap="round"/><path d="M304.3 258.6 L309.4 263.0" stroke="#8f8a68" stroke-width="0.5" stroke-linecap="round"/><path d="M304.7 251.1 L298.8 250.5" stroke="#8f8a68" stroke-width="0.55" stroke-linecap="round"/><path d="M301.8 250.8 L298.0 247.4" stroke="#8f8a68" stroke-width="0.5" stroke-linecap="round"/><path d="M300.3 257.1 L290.8 256.9" stroke="#8f8a68" stroke-width="0.55" stroke-linecap="round"/><path d="M295.6 257.0 L289.7 253.9" stroke="#8f8a68" stroke-width="0.5" stroke-linecap="round"/><path d="M296.8 262.8 L301.4 271.9" stroke="#8f8a68" stroke-width="0.55" stroke-linecap="round"/><path d="M299.1 267.3 L304.6 271.5" stroke="#8f8a68" stroke-width="0.5" stroke-linecap="round"/><path d="M330.0 243.0 L335.0 232.0 L334.0 222.0" fill="none" stroke="#8f8a68" stroke-width="0.8" stroke-linecap="round" stroke-linejoin="round"/><path d="M331.4 240.0 L328.4 235.6" stroke="#8f8a68" stroke-width="0.55" stroke-linecap="round"/><path d="M329.9 237.8 L325.3 236.4" stroke="#8f8a68" stroke-width="0.5" stroke-linecap="round"/><path d="M332.4 237.8 L327.0 230.0" stroke="#8f8a68" stroke-width="0.55" stroke-linecap="round"/><path d="M329.7 233.9 L323.9 230.8" stroke="#8f8a68" stroke-width="0.5" stroke-linecap="round"/><path d="M334.6 228.2 L341.5 223.0" stroke="#8f8a68" stroke-width="0.55" stroke-linecap="round"/><path d="M338.1 225.6 L344.2 224.8" stroke="#8f8a68" stroke-width="0.5" stroke-linecap="round"/><path d="M334.3 224.8 L339.5 220.9" stroke="#8f8a68" stroke-width="0.55" stroke-linecap="round"/><path d="M336.9 222.9 L342.2 222.7" stroke="#8f8a68" stroke-width="0.5" stroke-linecap="round"/><path d="M307.0 300.0 L305.0 310.0 L310.0 320.0" fill="none" stroke="#8f8a68" stroke-width="0.8" stroke-linecap="round" stroke-linejoin="round"/><path d="M305.3 308.3 L296.2 311.6" stroke="#8f8a68" stroke-width="0.55" stroke-linecap="round"/><path d="M300.7 309.9 L294.1 309.1" stroke="#8f8a68" stroke-width="0.5" stroke-linecap="round"/><path d="M306.9 300.4 L299.4 303.1" stroke="#8f8a68" stroke-width="0.55" stroke-linecap="round"/><path d="M303.2 301.8 L297.3 300.7" stroke="#8f8a68" stroke-width="0.5" stroke-linecap="round"/><path d="M306.5 313.1 L314.9 313.7" stroke="#8f8a68" stroke-width="0.55" stroke-linecap="round"/><path d="M310.7 313.4 L316.3 310.8" stroke="#8f8a68" stroke-width="0.5" stroke-linecap="round"/><path d="M307.0 314.1 L311.8 314.4" stroke="#8f8a68" stroke-width="0.55" stroke-linecap="round"/><path d="M309.4 314.2 L313.2 311.5" stroke="#8f8a68" stroke-width="0.5" stroke-linecap="round"/><path d="M334.0 307.0 L330.0 318.0 L322.0 326.0" fill="none" stroke="#8f8a68" stroke-width="0.8" stroke-linecap="round" stroke-linejoin="round"/><path d="M330.7 316.1 L336.5 323.3" stroke="#8f8a68" stroke-width="0.55" stroke-linecap="round"/><path d="M333.6 319.7 L339.5 322.3" stroke="#8f8a68" stroke-width="0.5" stroke-linecap="round"/><path d="M330.8 315.8 L335.4 321.4" stroke="#8f8a68" stroke-width="0.55" stroke-linecap="round"/><path d="M333.1 318.6 L338.4 320.4" stroke="#8f8a68" stroke-width="0.5" stroke-linecap="round"/><path d="M325.0 323.0 L315.0 320.6" stroke="#8f8a68" stroke-width="0.55" stroke-linecap="round"/><path d="M320.0 321.8 L314.7 317.4" stroke="#8f8a68" stroke-width="0.5" stroke-linecap="round"/><path d="M324.5 323.5 L326.8 332.7" stroke="#8f8a68" stroke-width="0.55" stroke-linecap="round"/><path d="M325.7 328.1 L330.0 333.0" stroke="#8f8a68" stroke-width="0.5" stroke-linecap="round"/><path d="M357.0 314.0 L353.0 324.0 L356.0 334.0" fill="none" stroke="#8f8a68" stroke-width="0.8" stroke-linecap="round" stroke-linejoin="round"/><path d="M356.0 316.6 L361.5 323.8" stroke="#8f8a68" stroke-width="0.55" stroke-linecap="round"/><path d="M358.7 320.2 L364.5 322.9" stroke="#8f8a68" stroke-width="0.5" stroke-linecap="round"/><path d="M354.9 319.3 L358.3 323.9" stroke="#8f8a68" stroke-width="0.55" stroke-linecap="round"/><path d="M356.6 321.6 L361.4 323.0" stroke="#8f8a68" stroke-width="0.5" stroke-linecap="round"/><path d="M353.8 326.7 L348.6 332.5" stroke="#8f8a68" stroke-width="0.55" stroke-linecap="round"/><path d="M351.2 329.6 L345.6 331.3" stroke="#8f8a68" stroke-width="0.5" stroke-linecap="round"/><path d="M355.8 333.5 L362.6 335.2" stroke="#8f8a68" stroke-width="0.55" stroke-linecap="round"/><path d="M359.2 334.3 L364.4 332.5" stroke="#8f8a68" stroke-width="0.5" stroke-linecap="round"/><path d="M374.0 227.0 L381.0 220.0 L384.0 212.0" fill="none" stroke="#8f8a68" stroke-width="0.8" stroke-linecap="round" stroke-linejoin="round"/><path d="M379.5 221.5 L378.3 216.4" stroke="#8f8a68" stroke-width="0.55" stroke-linecap="round"/><path d="M378.9 218.9 L375.1 216.1" stroke="#8f8a68" stroke-width="0.5" stroke-linecap="round"/><path d="M380.5 220.5 L385.8 221.8" stroke="#8f8a68" stroke-width="0.55" stroke-linecap="round"/><path d="M383.2 221.1 L386.1 225.0" stroke="#8f8a68" stroke-width="0.5" stroke-linecap="round"/><path d="M382.4 216.4 L378.1 211.0" stroke="#8f8a68" stroke-width="0.55" stroke-linecap="round"/><path d="M380.2 213.7 L375.0 212.0" stroke="#8f8a68" stroke-width="0.5" stroke-linecap="round"/><path d="M382.7 215.4 L390.0 214.1" stroke="#8f8a68" stroke-width="0.55" stroke-linecap="round"/><path d="M386.3 214.8 L391.6 216.9" stroke="#8f8a68" stroke-width="0.5" stroke-linecap="round"/><path d="M340.0 255.0 L348.0 246.0 L356.0 242.0" fill="none" stroke="#8f8a68" stroke-width="0.8" stroke-linecap="round" stroke-linejoin="round"/><path d="M345.2 249.1 L343.6 244.1" stroke="#8f8a68" stroke-width="0.55" stroke-linecap="round"/><path d="M344.4 246.6 L340.4 244.0" stroke="#8f8a68" stroke-width="0.5" stroke-linecap="round"/><path d="M346.9 247.2 L345.2 241.6" stroke="#8f8a68" stroke-width="0.55" stroke-linecap="round"/><path d="M346.0 244.4 L342.0 241.4" stroke="#8f8a68" stroke-width="0.5" stroke-linecap="round"/><path d="M355.2 242.4 L356.0 232.1" stroke="#8f8a68" stroke-width="0.55" stroke-linecap="round"/><path d="M355.6 237.2 L353.1 230.7" stroke="#8f8a68" stroke-width="0.5" stroke-linecap="round"/><path d="M352.3 243.9 L357.5 247.2" stroke="#8f8a68" stroke-width="0.55" stroke-linecap="round"/><path d="M354.9 245.5 L356.8 250.3" stroke="#8f8a68" stroke-width="0.5" stroke-linecap="round"/><path d="M372 268 Q377 280 374 293" fill="none" stroke="#6f6a42" stroke-width="1.8" stroke-linecap="round"/><path d="M344 286 Q340 296 344 306" fill="none" stroke="#6f6a42" stroke-width="1.8" stroke-linecap="round"/><path d="M386 296 Q392 306 390 316" fill="none" stroke="#6f6a42" stroke-width="1.8" stroke-linecap="round"/><path d="M322 312 Q318 320 320 328" fill="none" stroke="#6f6a42" stroke-width="1.8" stroke-linecap="round"/><circle cx="284.9" cy="192.7" r="1.15" fill="#cdc7ab"/><circle cx="281.7" cy="192.6" r="1.15" fill="#cdc7ab"/><circle cx="297.3" cy="190.5" r="1.15" fill="#cdc7ab"/><circle cx="298.0" cy="187.3" r="1.15" fill="#cdc7ab"/><circle cx="302.7" cy="197.1" r="1.15" fill="#cdc7ab"/><circle cx="303.2" cy="194.0" r="1.15" fill="#cdc7ab"/><circle cx="303.4" cy="194.5" r="1.15" fill="#cdc7ab"/><circle cx="303.9" cy="191.4" r="1.15" fill="#cdc7ab"/><circle cx="316.9" cy="206.7" r="1.15" fill="#cdc7ab"/><circle cx="317.0" cy="203.5" r="1.15" fill="#cdc7ab"/><circle cx="303.7" cy="214.1" r="1.15" fill="#cdc7ab"/><circle cx="300.5" cy="214.7" r="1.15" fill="#cdc7ab"/><circle cx="321.9" cy="209.8" r="1.15" fill="#cdc7ab"/><circle cx="321.7" cy="206.6" r="1.15" fill="#cdc7ab"/><circle cx="320.4" cy="212.2" r="1.15" fill="#cdc7ab"/><circle cx="320.2" cy="209.0" r="1.15" fill="#cdc7ab"/><circle cx="326.5" cy="218.3" r="1.15" fill="#cdc7ab"/><circle cx="327.8" cy="215.4" r="1.15" fill="#cdc7ab"/><circle cx="318.6" cy="232.0" r="1.15" fill="#cdc7ab"/><circle cx="315.4" cy="231.3" r="1.15" fill="#cdc7ab"/><circle cx="337.4" cy="241.9" r="1.15" fill="#cdc7ab"/><circle cx="338.9" cy="239.1" r="1.15" fill="#cdc7ab"/><circle cx="334.3" cy="237.0" r="1.15" fill="#cdc7ab"/><circle cx="335.8" cy="234.2" r="1.15" fill="#cdc7ab"/><circle cx="341.5" cy="245.0" r="1.15" fill="#cdc7ab"/><circle cx="342.1" cy="241.8" r="1.15" fill="#cdc7ab"/><circle cx="340.7" cy="245.6" r="1.15" fill="#cdc7ab"/><circle cx="341.4" cy="242.5" r="1.15" fill="#cdc7ab"/><circle cx="346.2" cy="251.4" r="1.15" fill="#cdc7ab"/><circle cx="345.5" cy="248.3" r="1.15" fill="#cdc7ab"/><circle cx="348.9" cy="264.3" r="1.15" fill="#cdc7ab"/><circle cx="345.9" cy="265.6" r="1.15" fill="#cdc7ab"/><circle cx="356.1" cy="259.5" r="1.15" fill="#cdc7ab"/><circle cx="356.8" cy="256.3" r="1.15" fill="#cdc7ab"/><circle cx="368.5" cy="272.9" r="1.15" fill="#cdc7ab"/><circle cx="369.2" cy="269.8" r="1.15" fill="#cdc7ab"/><circle cx="370.6" cy="300.0" r="1.15" fill="#cdc7ab"/><circle cx="367.4" cy="299.6" r="1.15" fill="#cdc7ab"/><circle cx="378.0" cy="285.5" r="1.15" fill="#cdc7ab"/><circle cx="379.0" cy="282.5" r="1.15" fill="#cdc7ab"/><circle cx="283.0" cy="180.0" r="1.15" fill="#cdc7ab"/><circle cx="374.0" cy="294.0" r="1.15" fill="#cdc7ab"/><circle cx="279.8" cy="240.4" r="1.15" fill="#cdc7ab"/><circle cx="278.7" cy="237.4" r="1.15" fill="#cdc7ab"/><circle cx="272.2" cy="252.0" r="1.15" fill="#cdc7ab"/><circle cx="269.6" cy="253.7" r="1.15" fill="#cdc7ab"/><circle cx="294.4" cy="241.1" r="1.15" fill="#cdc7ab"/><circle cx="292.2" cy="238.7" r="1.15" fill="#cdc7ab"/><circle cx="293.4" cy="256.7" r="1.15" fill="#cdc7ab"/><circle cx="291.5" cy="259.3" r="1.15" fill="#cdc7ab"/><circle cx="313.1" cy="241.8" r="1.15" fill="#cdc7ab"/><circle cx="311.1" cy="239.3" r="1.15" fill="#cdc7ab"/><circle cx="313.1" cy="241.9" r="1.15" fill="#cdc7ab"/><circle cx="311.1" cy="239.4" r="1.15" fill="#cdc7ab"/><circle cx="326.2" cy="255.5" r="1.15" fill="#cdc7ab"/><circle cx="323.8" cy="257.5" r="1.15" fill="#cdc7ab"/><circle cx="325.4" cy="257.6" r="1.15" fill="#cdc7ab"/><circle cx="322.9" cy="259.6" r="1.15" fill="#cdc7ab"/><circle cx="345.2" cy="264.1" r="1.15" fill="#cdc7ab"/><circle cx="342.5" cy="265.9" r="1.15" fill="#cdc7ab"/><circle cx="335.4" cy="245.4" r="1.15" fill="#cdc7ab"/><circle cx="334.3" cy="242.4" r="1.15" fill="#cdc7ab"/><circle cx="356.6" cy="256.6" r="1.15" fill="#cdc7ab"/><circle cx="356.1" cy="253.5" r="1.15" fill="#cdc7ab"/><circle cx="344.9" cy="261.0" r="1.15" fill="#cdc7ab"/><circle cx="341.9" cy="262.3" r="1.15" fill="#cdc7ab"/><circle cx="270.0" cy="243.0" r="1.15" fill="#cdc7ab"/><circle cx="354.0" cy="260.0" r="1.15" fill="#cdc7ab"/><circle cx="291.8" cy="310.3" r="1.15" fill="#cdc7ab"/><circle cx="289.3" cy="312.3" r="1.15" fill="#cdc7ab"/><circle cx="286.3" cy="296.3" r="1.15" fill="#cdc7ab"/><circle cx="284.8" cy="293.5" r="1.15" fill="#cdc7ab"/><circle cx="302.6" cy="296.5" r="1.15" fill="#cdc7ab"/><circle cx="300.3" cy="294.3" r="1.15" fill="#cdc7ab"/><circle cx="300.9" cy="305.5" r="1.15" fill="#cdc7ab"/><circle cx="299.2" cy="308.2" r="1.15" fill="#cdc7ab"/><circle cx="321.3" cy="293.6" r="1.15" fill="#cdc7ab"/><circle cx="319.7" cy="290.9" r="1.15" fill="#cdc7ab"/><circle cx="313.6" cy="295.3" r="1.15" fill="#cdc7ab"/><circle cx="312.0" cy="292.6" r="1.15" fill="#cdc7ab"/><circle cx="331.0" cy="297.7" r="1.15" fill="#cdc7ab"/><circle cx="330.0" cy="294.6" r="1.15" fill="#cdc7ab"/><circle cx="329.9" cy="297.5" r="1.15" fill="#cdc7ab"/><circle cx="328.9" cy="294.4" r="1.15" fill="#cdc7ab"/><circle cx="339.8" cy="317.0" r="1.15" fill="#cdc7ab"/><circle cx="337.0" cy="318.6" r="1.15" fill="#cdc7ab"/><circle cx="343.3" cy="306.0" r="1.15" fill="#cdc7ab"/><circle cx="342.4" cy="302.9" r="1.15" fill="#cdc7ab"/><circle cx="353.8" cy="318.7" r="1.15" fill="#cdc7ab"/><circle cx="351.4" cy="320.8" r="1.15" fill="#cdc7ab"/><circle cx="356.3" cy="320.1" r="1.15" fill="#cdc7ab"/><circle cx="353.8" cy="322.2" r="1.15" fill="#cdc7ab"/><circle cx="371.1" cy="319.5" r="1.15" fill="#cdc7ab"/><circle cx="369.1" cy="322.0" r="1.15" fill="#cdc7ab"/><circle cx="361.9" cy="309.4" r="1.15" fill="#cdc7ab"/><circle cx="359.9" cy="306.9" r="1.15" fill="#cdc7ab"/><circle cx="375.5" cy="305.9" r="1.15" fill="#cdc7ab"/><circle cx="372.7" cy="304.2" r="1.15" fill="#cdc7ab"/><circle cx="380.8" cy="301.5" r="1.15" fill="#cdc7ab"/><circle cx="378.1" cy="299.8" r="1.15" fill="#cdc7ab"/><circle cx="277.0" cy="299.0" r="1.15" fill="#cdc7ab"/><circle cx="380.0" cy="310.0" r="1.15" fill="#cdc7ab"/><circle cx="355.4" cy="196.5" r="1.15" fill="#cdc7ab"/><circle cx="352.5" cy="195.3" r="1.15" fill="#cdc7ab"/><circle cx="366.4" cy="192.6" r="1.15" fill="#cdc7ab"/><circle cx="368.2" cy="190.0" r="1.15" fill="#cdc7ab"/><circle cx="374.9" cy="218.2" r="1.15" fill="#cdc7ab"/><circle cx="376.4" cy="215.4" r="1.15" fill="#cdc7ab"/><circle cx="360.3" cy="218.3" r="1.15" fill="#cdc7ab"/><circle cx="357.2" cy="217.5" r="1.15" fill="#cdc7ab"/><circle cx="374.8" cy="239.9" r="1.15" fill="#cdc7ab"/><circle cx="377.9" cy="239.4" r="1.15" fill="#cdc7ab"/><circle cx="359.4" cy="235.6" r="1.15" fill="#cdc7ab"/><circle cx="358.2" cy="232.7" r="1.15" fill="#cdc7ab"/><circle cx="367.7" cy="245.9" r="1.15" fill="#cdc7ab"/><circle cx="370.9" cy="245.5" r="1.15" fill="#cdc7ab"/><circle cx="360.8" cy="241.0" r="1.15" fill="#cdc7ab"/><circle cx="359.7" cy="238.0" r="1.15" fill="#cdc7ab"/><circle cx="360.0" cy="190.0" r="1.15" fill="#cdc7ab"/><circle cx="364.0" cy="244.0" r="1.15" fill="#cdc7ab"/><circle cx="352.8" cy="316.5" r="1.15" fill="#cdc7ab"/><circle cx="349.7" cy="315.7" r="1.15" fill="#cdc7ab"/><circle cx="359.3" cy="332.5" r="1.15" fill="#cdc7ab"/><circle cx="359.3" cy="335.7" r="1.15" fill="#cdc7ab"/><circle cx="378.4" cy="301.7" r="1.15" fill="#cdc7ab"/><circle cx="375.4" cy="300.6" r="1.15" fill="#cdc7ab"/><circle cx="383.1" cy="313.3" r="1.15" fill="#cdc7ab"/><circle cx="382.6" cy="316.5" r="1.15" fill="#cdc7ab"/><circle cx="379.3" cy="296.4" r="1.15" fill="#cdc7ab"/><circle cx="376.1" cy="296.6" r="1.15" fill="#cdc7ab"/><circle cx="379.0" cy="297.0" r="1.15" fill="#cdc7ab"/><circle cx="375.8" cy="297.2" r="1.15" fill="#cdc7ab"/><circle cx="396.7" cy="293.7" r="1.15" fill="#cdc7ab"/><circle cx="398.1" cy="296.7" r="1.15" fill="#cdc7ab"/><circle cx="384.3" cy="295.5" r="1.15" fill="#cdc7ab"/><circle cx="381.2" cy="296.2" r="1.15" fill="#cdc7ab"/><circle cx="350.0" cy="330.0" r="1.15" fill="#cdc7ab"/><circle cx="392.0" cy="290.0" r="1.15" fill="#cdc7ab"/><circle cx="286.8" cy="218.5" r="1.15" fill="#cdc7ab"/><circle cx="287.9" cy="215.5" r="1.15" fill="#cdc7ab"/><circle cx="285.8" cy="218.6" r="1.15" fill="#cdc7ab"/><circle cx="286.9" cy="215.6" r="1.15" fill="#cdc7ab"/><circle cx="278.7" cy="227.4" r="1.15" fill="#cdc7ab"/><circle cx="278.8" cy="224.2" r="1.15" fill="#cdc7ab"/><circle cx="285.1" cy="238.7" r="1.15" fill="#cdc7ab"/><circle cx="288.2" cy="239.5" r="1.15" fill="#cdc7ab"/><circle cx="300.0" cy="223.0" r="1.15" fill="#cdc7ab"/><circle cx="283.0" cy="232.0" r="1.15" fill="#cdc7ab"/><circle cx="303.8" cy="191.0" r="1.15" fill="#cdc7ab"/><circle cx="306.9" cy="191.6" r="1.15" fill="#cdc7ab"/><circle cx="289.4" cy="197.4" r="1.15" fill="#cdc7ab"/><circle cx="288.0" cy="200.3" r="1.15" fill="#cdc7ab"/><circle cx="302.7" cy="189.4" r="1.15" fill="#cdc7ab"/><circle cx="305.0" cy="191.7" r="1.15" fill="#cdc7ab"/><circle cx="302.0" cy="190.6" r="1.15" fill="#cdc7ab"/><circle cx="304.3" cy="192.9" r="1.15" fill="#cdc7ab"/><circle cx="302.0" cy="203.0" r="1.15" fill="#cdc7ab"/><circle cx="298.0" cy="184.0" r="1.15" fill="#cdc7ab"/><circle cx="314.0" cy="201.7" r="1.15" fill="#cdc7ab"/><circle cx="310.9" cy="202.6" r="1.15" fill="#cdc7ab"/><circle cx="325.8" cy="210.4" r="1.15" fill="#cdc7ab"/><circle cx="327.4" cy="213.2" r="1.15" fill="#cdc7ab"/><circle cx="327.6" cy="197.6" r="1.15" fill="#cdc7ab"/><circle cx="330.3" cy="199.4" r="1.15" fill="#cdc7ab"/><circle cx="328.2" cy="197.5" r="1.15" fill="#cdc7ab"/><circle cx="330.9" cy="199.3" r="1.15" fill="#cdc7ab"/><circle cx="317.0" cy="215.0" r="1.15" fill="#cdc7ab"/><circle cx="320.0" cy="196.0" r="1.15" fill="#cdc7ab"/><circle cx="306.2" cy="263.1" r="1.15" fill="#cdc7ab"/><circle cx="309.4" cy="263.0" r="1.15" fill="#cdc7ab"/><circle cx="298.8" cy="250.5" r="1.15" fill="#cdc7ab"/><circle cx="298.0" cy="247.4" r="1.15" fill="#cdc7ab"/><circle cx="290.8" cy="256.9" r="1.15" fill="#cdc7ab"/><circle cx="289.7" cy="253.9" r="1.15" fill="#cdc7ab"/><circle cx="301.4" cy="271.9" r="1.15" fill="#cdc7ab"/><circle cx="304.6" cy="271.5" r="1.15" fill="#cdc7ab"/><circle cx="307.0" cy="248.0" r="1.15" fill="#cdc7ab"/><circle cx="296.0" cy="264.0" r="1.15" fill="#cdc7ab"/><circle cx="328.4" cy="235.6" r="1.15" fill="#cdc7ab"/><circle cx="325.3" cy="236.4" r="1.15" fill="#cdc7ab"/><circle cx="327.0" cy="230.0" r="1.15" fill="#cdc7ab"/><circle cx="323.9" cy="230.8" r="1.15" fill="#cdc7ab"/><circle cx="341.5" cy="223.0" r="1.15" fill="#cdc7ab"/><circle cx="344.2" cy="224.8" r="1.15" fill="#cdc7ab"/><circle cx="339.5" cy="220.9" r="1.15" fill="#cdc7ab"/><circle cx="342.2" cy="222.7" r="1.15" fill="#cdc7ab"/><circle cx="330.0" cy="243.0" r="1.15" fill="#cdc7ab"/><circle cx="334.0" cy="222.0" r="1.15" fill="#cdc7ab"/><circle cx="296.2" cy="311.6" r="1.15" fill="#cdc7ab"/><circle cx="294.1" cy="309.1" r="1.15" fill="#cdc7ab"/><circle cx="299.4" cy="303.1" r="1.15" fill="#cdc7ab"/><circle cx="297.3" cy="300.7" r="1.15" fill="#cdc7ab"/><circle cx="314.9" cy="313.7" r="1.15" fill="#cdc7ab"/><circle cx="316.3" cy="310.8" r="1.15" fill="#cdc7ab"/><circle cx="311.8" cy="314.4" r="1.15" fill="#cdc7ab"/><circle cx="313.2" cy="311.5" r="1.15" fill="#cdc7ab"/><circle cx="307.0" cy="300.0" r="1.15" fill="#cdc7ab"/><circle cx="310.0" cy="320.0" r="1.15" fill="#cdc7ab"/><circle cx="336.5" cy="323.3" r="1.15" fill="#cdc7ab"/><circle cx="339.5" cy="322.3" r="1.15" fill="#cdc7ab"/><circle cx="335.4" cy="321.4" r="1.15" fill="#cdc7ab"/><circle cx="338.4" cy="320.4" r="1.15" fill="#cdc7ab"/><circle cx="315.0" cy="320.6" r="1.15" fill="#cdc7ab"/><circle cx="314.7" cy="317.4" r="1.15" fill="#cdc7ab"/><circle cx="326.8" cy="332.7" r="1.15" fill="#cdc7ab"/><circle cx="330.0" cy="333.0" r="1.15" fill="#cdc7ab"/><circle cx="334.0" cy="307.0" r="1.15" fill="#cdc7ab"/><circle cx="322.0" cy="326.0" r="1.15" fill="#cdc7ab"/><circle cx="361.5" cy="323.8" r="1.15" fill="#cdc7ab"/><circle cx="364.5" cy="322.9" r="1.15" fill="#cdc7ab"/><circle cx="358.3" cy="323.9" r="1.15" fill="#cdc7ab"/><circle cx="361.4" cy="323.0" r="1.15" fill="#cdc7ab"/><circle cx="348.6" cy="332.5" r="1.15" fill="#cdc7ab"/><circle cx="345.6" cy="331.3" r="1.15" fill="#cdc7ab"/><circle cx="362.6" cy="335.2" r="1.15" fill="#cdc7ab"/><circle cx="364.4" cy="332.5" r="1.15" fill="#cdc7ab"/><circle cx="357.0" cy="314.0" r="1.15" fill="#cdc7ab"/><circle cx="356.0" cy="334.0" r="1.15" fill="#cdc7ab"/><circle cx="378.3" cy="216.4" r="1.15" fill="#cdc7ab"/><circle cx="375.1" cy="216.1" r="1.15" fill="#cdc7ab"/><circle cx="385.8" cy="221.8" r="1.15" fill="#cdc7ab"/><circle cx="386.1" cy="225.0" r="1.15" fill="#cdc7ab"/><circle cx="378.1" cy="211.0" r="1.15" fill="#cdc7ab"/><circle cx="375.0" cy="212.0" r="1.15" fill="#cdc7ab"/><circle cx="390.0" cy="214.1" r="1.15" fill="#cdc7ab"/><circle cx="391.6" cy="216.9" r="1.15" fill="#cdc7ab"/><circle cx="374.0" cy="227.0" r="1.15" fill="#cdc7ab"/><circle cx="384.0" cy="212.0" r="1.15" fill="#cdc7ab"/><circle cx="343.6" cy="244.1" r="1.15" fill="#cdc7ab"/><circle cx="340.4" cy="244.0" r="1.15" fill="#cdc7ab"/><circle cx="345.2" cy="241.6" r="1.15" fill="#cdc7ab"/><circle cx="342.0" cy="241.4" r="1.15" fill="#cdc7ab"/><circle cx="356.0" cy="232.1" r="1.15" fill="#cdc7ab"/><circle cx="353.1" cy="230.7" r="1.15" fill="#cdc7ab"/><circle cx="357.5" cy="247.2" r="1.15" fill="#cdc7ab"/><circle cx="356.8" cy="250.3" r="1.15" fill="#cdc7ab"/><circle cx="340.0" cy="255.0" r="1.15" fill="#cdc7ab"/><circle cx="356.0" cy="242.0" r="1.15" fill="#cdc7ab"/><path d="M371 149 Q371.2 146.8 374 146.8 L382 147.4 Q384 147.6 384.3 149.5 L400 300 L400 337 L389.5 337Z" fill="url(#pen)"/><path d="M374.3 190 L377.6 190 L394 337 L390.6 337Z" fill="#c3c6c7" opacity="0.7"/><path d="M383.6 149.6 Q386.6 148.6 388.2 150.6 L393.4 204 Q393 207.4 390.4 207 Z" fill="#242424"/></g></svg>
<div class="a" style="left:0.0px;top:0.0px;width:399.5px;height:46.3px;background:#ffffff;"></div>
<div class="nav" style="left:6.6px;top:15px;color:#2fd0a0">Home</div>
<div class="nav" style="left:57.4px;top:15px">Blog</div>
<svg style="left:83.5px;top:20.5px" width="7" height="5" viewBox="0 0 7 5"><path d="M0.8 1 L3.5 3.6 L6.2 1" fill="none" stroke="#3a4f48" stroke-width="1.1"/></svg>
<div class="nav" style="left:111.6px;top:15px;letter-spacing:0.15px">About us</div>
<div class="nav" style="left:177.6px;top:15px;letter-spacing:0.15px">Contact us</div>
<div class="a" style="left:248.3px;top:10.2px;width:24.3px;height:24.6px;background:#f3efea;"></div>
<svg style="left:254.1px;top:15.9px" width="12" height="12" viewBox="0 0 12 12"><circle cx="5.4" cy="5.4" r="4.2" fill="none" stroke="#3a4f48" stroke-width="1.35"/><path d="M8.6 8.6 L11 11" stroke="#3a4f48" stroke-width="1.35" stroke-linecap="round"/></svg>
<div class="a" style="left:290.2px;top:7.7px;width:95.0px;height:30.2px;background:#03c98e;"></div>
<div class="nav" style="left:290.2px;top:15.4px;width:95px;text-align:center;color:#e9fff7;font-size:10.7px">Get The Book</div>
<div class="h1" style="right:287px;top:160.8px;letter-spacing:1.5px">Proven</div>
<div class="h1" style="right:372.8px;top:205.9px;letter-spacing:3px">and</div>
<div class="h1" style="right:385px;top:250.9px">Hacks</div>
<div class="a" style="left:0.0px;top:471.4px;width:399.5px;height:100.0px;background:#033123;"></div>
<div class="a" style="left:302.6px;top:523.7px;width:85.2px;height:21.2px;border:1px solid #a3b1ab;border-radius:2.5px"></div>
<div class="nav" style="left:312.8px;top:527.2px;color:#f4f7f5;font-size:10.7px">Load More</div>
<svg style="left:370.6px;top:530.2px" width="6" height="8" viewBox="0 0 6 8"><path d="M1.5 1 L4.5 4 L1.5 7" fill="none" stroke="#fff" stroke-width="1.2"/></svg>
<div class="nav" style="right:323.3px;top:562.4px;color:#e9efec;font-size:10.5px;letter-spacing:0.2px">consectetur adipiscing elit. Ut</div>
</div>
<div class="a" style="left:399.4px;top:0.0px;width:10.4px;height:569.0px;background:#fcfcfc;"></div>
<svg style="left:400.5px;top:2.5px" width="8" height="5" viewBox="0 0 8 5"><path d="M0.6 4.6 L4 0.6 L7.4 4.6Z" fill="#8c8c8c"/></svg>
<div class="a" style="left:401.4px;top:11.2px;width:5.4px;height:84.0px;background:#8c8c8c;border-radius:2.7px"></div>
<div class="a" style="left:409.7px;top:0.0px;width:614.3px;height:569.0px;background:#282828;"></div>
<div class="a" style="left:409.7px;top:0.0px;width:614.3px;height:16.6px;background:#3c3c3c;"></div>
<div class="a" style="left:410.0px;top:16.2px;width:614.0px;height:0.8px;background:#525252;"></div>
<div class="a" style="left:409.7px;top:17.0px;width:614.3px;height:17.0px;background:#3a3a3a;"></div>
<div class="a" style="left:410.0px;top:33.8px;width:614.0px;height:0.8px;background:#4a4a4a;"></div>
<svg style="left:415.6px;top:3.8px" width="10" height="9" viewBox="0 0 10 9"><path d="M4 8.3H1.2V1H9v3.2" fill="none" stroke="#c7c7c7" stroke-width="0.9" stroke-dasharray="1.4 0.9"/><path d="M4.6 4.2 L9.2 8.6 M4.6 4.2 V7.6 M4.6 4.2 H8" fill="none" stroke="#c7c7c7" stroke-width="1.1"/></svg>
<svg style="left:433.2px;top:3.8px" width="11" height="9" viewBox="0 0 11 9"><path d="M2.2 7V1.2H9.2" fill="none" stroke="#c7c7c7" stroke-width="1"/><path d="M0.4 7.6H6" stroke="#c7c7c7" stroke-width="1.1"/><rect x="7" y="2.8" width="3.4" height="5.2" rx="0.6" fill="none" stroke="#c7c7c7" stroke-width="0.9"/></svg>
<div class="a" style="left:450.3px;top:3.5px;width:0.8px;height:10.0px;background:#5a5a5a;"></div>
<div class="t k" style="left:459.0px;top:2.8px;color:#c7c7c7;">요소</div>
<div class="t k" style="left:487.7px;top:2.8px;color:#c7c7c7;">콘솔</div>
<div class="t k" style="left:516.2px;top:2.8px;color:#a8c7fa;">소스</div>
<div class="t k" style="left:544.4px;top:2.8px;color:#c7c7c7;">네트워크</div>
<div class="t k" style="left:588.5px;top:2.8px;color:#c7c7c7;">성능</div>
<div class="t k" style="left:616.8px;top:2.8px;color:#c7c7c7;">메모리</div>
<div class="t k" style="left:653.8px;top:2.8px;color:#c7c7c7;">애플리케이션</div>
<div class="t l" style="left:712.8px;top:3.1px;color:#c7c7c7;">Lighthouse</div>
<div class="a" style="left:509.4px;top:14.4px;width:28.8px;height:2.2px;background:#a4cbef;border-radius:1.2px 1.2px 0 0"></div>
<div class="a" style="left:963.6px;top:3.5px;width:0.8px;height:10.0px;background:#5a5a5a;"></div>
<svg style="left:970.7px;top:2.8px" width="10" height="10" viewBox="0 0 10 10"><g fill="none" stroke="#c7c7c7" stroke-width="0.95"><circle cx="5" cy="5" r="1.5"/><path d="M5 0.9 L6.3 1.3 L7.2 0.9 L8.6 2.2 L8.3 3.3 L9.1 4.3 V5.7 L8.3 6.7 L8.6 7.8 L7.2 9.1 L6.3 8.7 L5 9.1 L3.7 8.7 L2.8 9.1 L1.4 7.8 L1.7 6.7 L0.9 5.7 V4.3 L1.7 3.3 L1.4 2.2 L2.8 0.9 L3.7 1.3Z"/></g></svg>
<svg style="left:992.5px;top:3.0px" width="3" height="10" viewBox="0 0 3 10"><circle cx="1.5" cy="2.1" r="0.85" fill="#c7c7c7"/><circle cx="1.5" cy="5" r="0.85" fill="#c7c7c7"/><circle cx="1.5" cy="7.9" r="0.85" fill="#c7c7c7"/></svg>
<svg style="left:1008.2px;top:4.4px" width="7" height="7" viewBox="0 0 7 7"><path d="M0.6 0.6 L6.4 6.4 M6.4 0.6 L0.6 6.4" stroke="#c7c7c7" stroke-width="1.05"/></svg>
<div class="t k" style="left:417.0px;top:19.6px;color:#a8c7fa;">페이지</div>
<div class="t k" style="left:452.0px;top:19.6px;color:#c7c7c7;">작업공간</div>
<svg style="left:492.6px;top:22.2px" width="9" height="7" viewBox="0 0 9 7"><path d="M0.8 0.6 L3.6 3.5 L0.8 6.4 M4.8 0.6 L7.6 3.5 L4.8 6.4" fill="none" stroke="#c7c7c7" stroke-width="0.9"/></svg>
<svg style="left:544.4px;top:21.0px" width="3" height="10" viewBox="0 0 3 10"><circle cx="1.5" cy="2.1" r="0.8" fill="#c7c7c7"/><circle cx="1.5" cy="5" r="0.8" fill="#c7c7c7"/><circle cx="1.5" cy="7.9" r="0.8" fill="#c7c7c7"/></svg>
<div class="a" style="left:410.0px;top:32.0px;width:36.4px;height:2.0px;background:#a4d4e8;"></div>
<div class="a" style="left:555.0px;top:17.0px;width:1.6px;height:443.0px;background:#3f3f3f;"></div>
<div class="a" style="left:876.8px;top:17.0px;width:1.6px;height:443.0px;background:#3f3f3f;"></div>
<svg style="left:561.6px;top:21.2px" width="10" height="9" viewBox="0 0 10 9"><rect x="0.5" y="0.7" width="8.2" height="7.2" rx="0.8" fill="none" stroke="#c7c7c7" stroke-width="0.95"/><path d="M3.3 0.7V7.9" stroke="#c7c7c7" stroke-width="0.9"/><path d="M7 2.7 L5 4.3 L7 5.9Z" fill="#c7c7c7"/></svg>
<svg style="left:862.2px;top:21.2px" width="10" height="9" viewBox="0 0 10 9"><rect x="0.5" y="0.7" width="8.2" height="7.2" rx="0.8" fill="none" stroke="#c7c7c7" stroke-width="0.95"/><path d="M5.9 0.7V7.9" stroke="#c7c7c7" stroke-width="0.9"/><path d="M2.4 2.7 L4.4 4.3 L2.4 5.9Z" fill="#c7c7c7"/></svg>
<svg style="left:884.8px;top:21.4px" width="8.4" height="8" viewBox="0 0 8.4 8"><rect x="0.5" y="0.5" width="2.6" height="7" rx="0.5" fill="none" stroke="#c7c7c7" stroke-width="0.9"/><rect x="5.1" y="0.5" width="2.6" height="7" rx="0.5" fill="none" stroke="#c7c7c7" stroke-width="0.9"/></svg>
<svg style="left:902.6px;top:21.0px" width="10" height="9" viewBox="0 0 10 9"><path d="M1 6 Q1.6 1.8 5.4 2 Q7.6 2.2 8.6 3.6" fill="none" stroke="#7c7c7c" stroke-width="0.9"/><path d="M9 1.2 V4 H6.2" fill="none" stroke="#7c7c7c" stroke-width="0.9"/><circle cx="4.8" cy="7" r="0.9" fill="#7c7c7c"/></svg>
<svg style="left:921.5px;top:20.4px" width="7" height="10" viewBox="0 0 7 10"><path d="M3.5 0.4 V6 M1.2 3.8 L3.5 6.2 L5.8 3.8" fill="none" stroke="#7c7c7c" stroke-width="0.9"/><circle cx="3.5" cy="8.6" r="0.9" fill="#7c7c7c"/></svg>
<svg style="left:939.5px;top:20.4px" width="7" height="10" viewBox="0 0 7 10"><path d="M3.5 6.4 V0.8 M1.2 3 L3.5 0.6 L5.8 3" fill="none" stroke="#7c7c7c" stroke-width="0.9"/><circle cx="3.5" cy="8.6" r="0.9" fill="#7c7c7c"/></svg>
<svg style="left:956.4px;top:22.4px" width="10" height="6" viewBox="0 0 10 6"><path d="M0.4 3 H5.6 M3.6 0.8 L5.8 3 L3.6 5.2" fill="none" stroke="#7c7c7c" stroke-width="0.9"/><circle cx="8.4" cy="3" r="0.9" fill="#7c7c7c"/></svg>
<div class="a" style="left:972.6px;top:20.5px;width:0.8px;height:10.0px;background:#5a5a5a;"></div>
<svg style="left:979.0px;top:21.0px" width="11.4" height="9" viewBox="0 0 11.4 9"><path d="M3.2 1.6 H8 L10.6 4.5 L8 7.4 H5.6 M3.2 7.4 H1.2 V2.6" fill="none" stroke="#c7c7c7" stroke-width="0.95"/><path d="M0.8 0.5 L9.6 8.6" stroke="#c7c7c7" stroke-width="0.95"/></svg>
<svg style="left:418.2px;top:44.7px" width="4.8" height="3" viewBox="0 0 4.8 3"><path d="M0 0 H4.8 L2.4 3Z" fill="#c4c4c4"/></svg>
<svg style="left:427.8px;top:41.7px" width="11" height="8.6" viewBox="0 0 11 8.6"><rect x="0.6" y="0.8" width="9.8" height="7" rx="1" fill="none" stroke="#c7c7c7" stroke-width="1"/><path d="M0.6 1.9H10.4" stroke="#c7c7c7" stroke-width="1.5"/></svg>
<div class="t l" style="left:444.0px;top:40.4px;color:#e3e3e3;">top</div>
<svg style="left:426.0px;top:59.0px" width="4.8" height="3" viewBox="0 0 4.8 3"><path d="M0 0 H4.8 L2.4 3Z" fill="#c4c4c4"/></svg>
<svg style="left:434.8px;top:56.2px" width="12" height="8" viewBox="0 0 12 8"><path d="M3 7.4 H9.2 Q11.4 7.2 11.4 5.4 Q11.3 3.7 9.4 3.5 Q8.8 0.8 6.2 0.7 Q3.8 0.8 3.1 3.1 Q0.7 3.4 0.6 5.4 Q0.8 7.3 3 7.4Z" fill="none" stroke="#c7c7c7" stroke-width="1.1"/></svg>
<div class="t l" style="left:451.8px;top:54.7px;color:#e3e3e3;letter-spacing:-0.119px;">testpilotweb.com</div>
<svg style="left:433.8px;top:73.3px" width="4.8" height="3" viewBox="0 0 4.8 3"><path d="M0 0 H4.8 L2.4 3Z" fill="#c4c4c4"/></svg>
<svg style="left:443.4px;top:70.7px" width="11" height="8.6" viewBox="0 0 11 8.6"><path d="M0.6 1.6 Q0.6 0.7 1.5 0.7 H3.8 L5 1.9 H9.4 Q10.2 1.9 10.2 2.8 V6.8 Q10.2 7.7 9.3 7.7 H1.5 Q0.6 7.7 0.6 6.8Z" fill="none" stroke="#7cacf8" stroke-width="1"/><path d="M0.6 2.2 V1.5 Q0.6 0.7 1.5 0.7 H3.8 L5 1.9 L5 2.2Z" fill="#7cacf8"/></svg>
<div class="t l" style="left:459.6px;top:69.0px;color:#e3e3e3;letter-spacing:-0.039px;">wp-content</div>
<svg style="left:442.8px;top:86.3px" width="3" height="4.8" viewBox="0 0 3 4.8"><path d="M0 0 V4.8 L3 2.4Z" fill="#c4c4c4"/></svg>
<svg style="left:451.2px;top:84.9px" width="11" height="8.6" viewBox="0 0 11 8.6"><path d="M0.6 1.6 Q0.6 0.7 1.5 0.7 H3.8 L5 1.9 H9.4 Q10.2 1.9 10.2 2.8 V6.8 Q10.2 7.7 9.3 7.7 H1.5 Q0.6 7.7 0.6 6.8Z" fill="none" stroke="#7cacf8" stroke-width="1"/><path d="M0.6 2.2 V1.5 Q0.6 0.7 1.5 0.7 H3.8 L5 1.9 L5 2.2Z" fill="#7cacf8"/></svg>
<div class="t l" style="left:467.4px;top:83.2px;color:#e3e3e3;letter-spacing:-0.100px;">plugins</div>
<svg style="left:441.6px;top:101.8px" width="4.8" height="3" viewBox="0 0 4.8 3"><path d="M0 0 H4.8 L2.4 3Z" fill="#c4c4c4"/></svg>
<svg style="left:451.2px;top:99.2px" width="11" height="8.6" viewBox="0 0 11 8.6"><path d="M0.6 1.6 Q0.6 0.7 1.5 0.7 H3.8 L5 1.9 H9.4 Q10.2 1.9 10.2 2.8 V6.8 Q10.2 7.7 9.3 7.7 H1.5 Q0.6 7.7 0.6 6.8Z" fill="none" stroke="#7cacf8" stroke-width="1"/><path d="M0.6 2.2 V1.5 Q0.6 0.7 1.5 0.7 H3.8 L5 1.9 L5 2.2Z" fill="#7cacf8"/></svg>
<div class="t l" style="left:467.4px;top:97.5px;color:#e3e3e3;letter-spacing:-0.251px;">themes/kadence/assets</div>
<svg style="left:450.6px;top:114.9px" width="3" height="4.8" viewBox="0 0 3 4.8"><path d="M0 0 V4.8 L3 2.4Z" fill="#c4c4c4"/></svg>
<svg style="left:459.0px;top:113.5px" width="11" height="8.6" viewBox="0 0 11 8.6"><path d="M0.6 1.6 Q0.6 0.7 1.5 0.7 H3.8 L5 1.9 H9.4 Q10.2 1.9 10.2 2.8 V6.8 Q10.2 7.7 9.3 7.7 H1.5 Q0.6 7.7 0.6 6.8Z" fill="none" stroke="#7cacf8" stroke-width="1"/><path d="M0.6 2.2 V1.5 Q0.6 0.7 1.5 0.7 H3.8 L5 1.9 L5 2.2Z" fill="#7cacf8"/></svg>
<div class="t l" style="left:475.2px;top:111.8px;color:#e3e3e3;">css</div>
<svg style="left:450.6px;top:129.2px" width="3" height="4.8" viewBox="0 0 3 4.8"><path d="M0 0 V4.8 L3 2.4Z" fill="#c4c4c4"/></svg>
<svg style="left:459.0px;top:127.8px" width="11" height="8.6" viewBox="0 0 11 8.6"><path d="M0.6 1.6 Q0.6 0.7 1.5 0.7 H3.8 L5 1.9 H9.4 Q10.2 1.9 10.2 2.8 V6.8 Q10.2 7.7 9.3 7.7 H1.5 Q0.6 7.7 0.6 6.8Z" fill="none" stroke="#7cacf8" stroke-width="1"/><path d="M0.6 2.2 V1.5 Q0.6 0.7 1.5 0.7 H3.8 L5 1.9 L5 2.2Z" fill="#7cacf8"/></svg>
<div class="t l" style="left:475.2px;top:126.1px;color:#e3e3e3;">js</div>
<div class="a" style="left:410.0px;top:139.1px;width:142.7px;height:14.2px;background:#3b3b3b;border-radius:0 7px 7px 0"></div>
<svg style="left:441.6px;top:144.7px" width="4.8" height="3" viewBox="0 0 4.8 3"><path d="M0 0 H4.8 L2.4 3Z" fill="#c4c4c4"/></svg>
<svg style="left:451.2px;top:142.1px" width="11" height="8.6" viewBox="0 0 11 8.6"><path d="M0.6 1.6 Q0.6 0.7 1.5 0.7 H3.8 L5 1.9 H9.4 Q10.2 1.9 10.2 2.8 V6.8 Q10.2 7.7 9.3 7.7 H1.5 Q0.6 7.7 0.6 6.8Z" fill="none" stroke="#7cacf8" stroke-width="1"/><path d="M0.6 2.2 V1.5 Q0.6 0.7 1.5 0.7 H3.8 L5 1.9 L5 2.2Z" fill="#7cacf8"/></svg>
<div class="t l" style="left:467.4px;top:140.4px;color:#e3e3e3;">uploads/2022/03</div>
<svg style="left:460.6px;top:155.5px" width="8" height="9.4" viewBox="0 0 8 9.4"><path d="M0.6 1.4 Q0.6 0.6 1.4 0.6 H4.8 L7.2 3 V8 Q7.2 8.8 6.4 8.8 H1.4 Q0.6 8.8 0.6 8Z" fill="none" stroke="#37be5f" stroke-width="1"/><path d="M4.6 0.8 V3.2 H7" fill="none" stroke="#37be5f" stroke-width="0.8"/></svg>
<div class="t l" style="left:475.2px;top:154.6px;color:#e3e3e3;letter-spacing:-0.259px;">andres-urena-V7Uo<span style="font-size:6.2px">…</span></div>
<svg style="left:460.6px;top:169.8px" width="8" height="9.4" viewBox="0 0 8 9.4"><path d="M0.6 1.4 Q0.6 0.6 1.4 0.6 H4.8 L7.2 3 V8 Q7.2 8.8 6.4 8.8 H1.4 Q0.6 8.8 0.6 8Z" fill="none" stroke="#37be5f" stroke-width="1"/><path d="M4.6 0.8 V3.2 H7" fill="none" stroke="#37be5f" stroke-width="0.8"/></svg>
<div class="t l" style="left:475.2px;top:168.9px;color:#e3e3e3;letter-spacing:-0.166px;">batch-by-wisconsin<span style="font-size:6.2px">…</span></div>
<svg style="left:460.6px;top:184.1px" width="8" height="9.4" viewBox="0 0 8 9.4"><path d="M0.6 1.4 Q0.6 0.6 1.4 0.6 H4.8 L7.2 3 V8 Q7.2 8.8 6.4 8.8 H1.4 Q0.6 8.8 0.6 8Z" fill="none" stroke="#37be5f" stroke-width="1"/><path d="M4.6 0.8 V3.2 H7" fill="none" stroke="#37be5f" stroke-width="0.8"/></svg>
<div class="t l" style="left:475.2px;top:183.2px;color:#e3e3e3;letter-spacing:-0.166px;">batch-by-wisconsin<span style="font-size:6.2px">…</span></div>
<svg style="left:460.6px;top:198.4px" width="8" height="9.4" viewBox="0 0 8 9.4"><path d="M0.6 1.4 Q0.6 0.6 1.4 0.6 H4.8 L7.2 3 V8 Q7.2 8.8 6.4 8.8 H1.4 Q0.6 8.8 0.6 8Z" fill="none" stroke="#37be5f" stroke-width="1"/><path d="M4.6 0.8 V3.2 H7" fill="none" stroke="#37be5f" stroke-width="0.8"/></svg>
<div class="t l" style="left:475.2px;top:197.5px;color:#e3e3e3;letter-spacing:-0.341px;">lala-azizli-OFZUaeY<span style="font-size:6.2px">…</span></div>
<svg style="left:460.6px;top:212.7px" width="8" height="9.4" viewBox="0 0 8 9.4"><path d="M0.6 1.4 Q0.6 0.6 1.4 0.6 H4.8 L7.2 3 V8 Q7.2 8.8 6.4 8.8 H1.4 Q0.6 8.8 0.6 8Z" fill="none" stroke="#37be5f" stroke-width="1"/><path d="M4.6 0.8 V3.2 H7" fill="none" stroke="#37be5f" stroke-width="0.8"/></svg>
<div class="t l" style="left:475.2px;top:211.8px;color:#e3e3e3;letter-spacing:-0.060px;">logo-productivity.p<span style="font-size:6.2px">…</span></div>
<svg style="left:460.6px;top:226.9px" width="8" height="9.4" viewBox="0 0 8 9.4"><path d="M0.6 1.4 Q0.6 0.6 1.4 0.6 H4.8 L7.2 3 V8 Q7.2 8.8 6.4 8.8 H1.4 Q0.6 8.8 0.6 8Z" fill="none" stroke="#37be5f" stroke-width="1"/><path d="M4.6 0.8 V3.2 H7" fill="none" stroke="#37be5f" stroke-width="0.8"/></svg>
<div class="t l" style="left:475.2px;top:226.0px;color:#e3e3e3;letter-spacing:-0.181px;">pexels-polina-koval<span style="font-size:6.2px">…</span></div>
<svg style="left:460.6px;top:241.2px" width="8" height="9.4" viewBox="0 0 8 9.4"><path d="M0.6 1.4 Q0.6 0.6 1.4 0.6 H4.8 L7.2 3 V8 Q7.2 8.8 6.4 8.8 H1.4 Q0.6 8.8 0.6 8Z" fill="none" stroke="#37be5f" stroke-width="1"/><path d="M4.6 0.8 V3.2 H7" fill="none" stroke="#37be5f" stroke-width="0.8"/></svg>
<div class="t l" style="left:475.2px;top:240.3px;color:#e3e3e3;letter-spacing:-0.167px;">renata-a1drienn-eb<span style="font-size:6.2px">…</span></div>
<svg style="left:460.6px;top:255.5px" width="8" height="9.4" viewBox="0 0 8 9.4"><path d="M0.6 1.4 Q0.6 0.6 1.4 0.6 H4.8 L7.2 3 V8 Q7.2 8.8 6.4 8.8 H1.4 Q0.6 8.8 0.6 8Z" fill="none" stroke="#37be5f" stroke-width="1"/><path d="M4.6 0.8 V3.2 H7" fill="none" stroke="#37be5f" stroke-width="0.8"/></svg>
<div class="t l" style="left:475.2px;top:254.6px;color:#e3e3e3;letter-spacing:-0.161px;">the-5th-jkDLNDGo<span style="font-size:6.2px">…</span></div>
<svg style="left:435.0px;top:272.0px" width="3" height="4.8" viewBox="0 0 3 4.8"><path d="M0 0 V4.8 L3 2.4Z" fill="#c4c4c4"/></svg>
<svg style="left:443.4px;top:270.6px" width="11" height="8.6" viewBox="0 0 11 8.6"><path d="M0.6 1.6 Q0.6 0.7 1.5 0.7 H3.8 L5 1.9 H9.4 Q10.2 1.9 10.2 2.8 V6.8 Q10.2 7.7 9.3 7.7 H1.5 Q0.6 7.7 0.6 6.8Z" fill="none" stroke="#7cacf8" stroke-width="1"/><path d="M0.6 2.2 V1.5 Q0.6 0.7 1.5 0.7 H3.8 L5 1.9 L5 2.2Z" fill="#7cacf8"/></svg>
<div class="t l" style="left:459.6px;top:268.9px;color:#e3e3e3;">wp-includes</div>
<svg style="left:445.0px;top:284.1px" width="8" height="9.4" viewBox="0 0 8 9.4"><path d="M0.6 1.4 Q0.6 0.6 1.4 0.6 H4.8 L7.2 3 V8 Q7.2 8.8 6.4 8.8 H1.4 Q0.6 8.8 0.6 8Z" fill="none" stroke="#c7c7c7" stroke-width="1"/><path d="M4.6 0.8 V3.2 H7" fill="none" stroke="#c7c7c7" stroke-width="0.8"/></svg>
<div class="t k" style="left:459.6px;top:283.2px;color:#e3e3e3;">(색인)</div>
<svg style="left:427.2px;top:300.5px" width="3" height="4.8" viewBox="0 0 3 4.8"><path d="M0 0 V4.8 L3 2.4Z" fill="#c4c4c4"/></svg>
<svg style="left:434.8px;top:298.9px" width="12" height="8" viewBox="0 0 12 8"><path d="M3 7.4 H9.2 Q11.4 7.2 11.4 5.4 Q11.3 3.7 9.4 3.5 Q8.8 0.8 6.2 0.7 Q3.8 0.8 3.1 3.1 Q0.7 3.4 0.6 5.4 Q0.8 7.3 3 7.4Z" fill="none" stroke="#c7c7c7" stroke-width="1.1"/></svg>
<div class="t l" style="left:451.8px;top:297.4px;color:#e3e3e3;">fonts.googleapis.com</div>
<div class="a" style="left:410.0px;top:310.4px;width:142.7px;height:14.2px;background:#3b3b3b;border-radius:0 7px 7px 0"></div>
<svg style="left:426.0px;top:316.0px" width="4.8" height="3" viewBox="0 0 4.8 3"><path d="M0 0 H4.8 L2.4 3Z" fill="#c4c4c4"/></svg>
<svg style="left:434.8px;top:313.2px" width="12" height="8" viewBox="0 0 12 8"><path d="M3 7.4 H9.2 Q11.4 7.2 11.4 5.4 Q11.3 3.7 9.4 3.5 Q8.8 0.8 6.2 0.7 Q3.8 0.8 3.1 3.1 Q0.7 3.4 0.6 5.4 Q0.8 7.3 3 7.4Z" fill="none" stroke="#c7c7c7" stroke-width="1.1"/></svg>
<div class="t l" style="left:451.8px;top:311.7px;color:#e3e3e3;">fonts.gstatic.com</div>
<svg style="left:435.0px;top:329.1px" width="3" height="4.8" viewBox="0 0 3 4.8"><path d="M0 0 V4.8 L3 2.4Z" fill="#c4c4c4"/></svg>
<svg style="left:443.4px;top:327.7px" width="11" height="8.6" viewBox="0 0 11 8.6"><path d="M0.6 1.6 Q0.6 0.7 1.5 0.7 H3.8 L5 1.9 H9.4 Q10.2 1.9 10.2 2.8 V6.8 Q10.2 7.7 9.3 7.7 H1.5 Q0.6 7.7 0.6 6.8Z" fill="none" stroke="#7cacf8" stroke-width="1"/><path d="M0.6 2.2 V1.5 Q0.6 0.7 1.5 0.7 H3.8 L5 1.9 L5 2.2Z" fill="#7cacf8"/></svg>
<div class="t l" style="left:459.6px;top:326.0px;color:#e3e3e3;">s</div>
<svg style="left:427.2px;top:343.4px" width="3" height="4.8" viewBox="0 0 3 4.8"><path d="M0 0 V4.8 L3 2.4Z" fill="#c4c4c4"/></svg>
<svg style="left:434.8px;top:341.8px" width="12" height="8" viewBox="0 0 12 8"><path d="M3 7.4 H9.2 Q11.4 7.2 11.4 5.4 Q11.3 3.7 9.4 3.5 Q8.8 0.8 6.2 0.7 Q3.8 0.8 3.1 3.1 Q0.7 3.4 0.6 5.4 Q0.8 7.3 3 7.4Z" fill="none" stroke="#c7c7c7" stroke-width="1.1"/></svg>
<div class="t l" style="left:451.8px;top:340.3px;color:#e3e3e3;letter-spacing:-0.127px;">startertemplatecloud.com</div>
<div class="a" style="left:556.6px;top:441.8px;width:320.2px;height:0.8px;background:#4a4a4a;"></div>
<div class="a" style="left:592.3px;top:188.3px;width:249.7px;height:46.5px;border:1px dashed #7a7a7a;border-radius:8px"></div>
<div class="a" style="left:603.6px;top:201.5px;width:21.0px;height:21.0px;background:#004a77;border-radius:50%"></div>
<svg style="left:608.7px;top:206.6px" width="11" height="11" viewBox="0 0 11 11"><path d="M2.5 7.2 A3.4 3.4 0 0 1 5.4 1.8" fill="none" stroke="#c2e7ff" stroke-width="1.05"/><path d="M5 0.3 L7 1.8 L5 3.3Z" fill="#c2e7ff"/><path d="M7.5 2.8 A3.4 3.4 0 0 1 4.6 8.2" fill="none" stroke="#c2e7ff" stroke-width="1.05"/><path d="M5 6.7 L3 8.2 L5 9.7Z" fill="#c2e7ff"/></svg>
<div class="t l" style="left:643.2px;top:200.1px;color:#e3e3e3;letter-spacing:-0.06px">To sync edits to the workspace, drop a folder with</div>
<div class="t l" style="left:675.5px;top:212.4px;color:#e3e3e3">your sources here or <span class="lnk k" style="line-height:10px">폴더 선택</span></div>
<div class="t k lnk" style="left:600.0px;top:257.2px;">파일 열기</div>
<div class="t k lnk" style="left:600.0px;top:280.9px;">명령어 실행</div>
<div class="a" style="left:600.0px;top:273.6px;width:234.3px;height:0.8px;background:#4a4a4a;"></div>
<div class="key" style="left:724.1px;top:255.3px;width:18.6px">Ctrl</div>
<div class="key" style="left:746.8px;top:255.3px;width:15.0px">P</div>
<div class="key" style="left:724.1px;top:279.4px;width:18.6px">Ctrl</div>
<div class="key" style="left:746.8px;top:279.4px;width:22.4px">Shift</div>
<div class="key" style="left:773.6px;top:279.4px;width:15.4px">P</div>
<div class="a" style="left:878.4px;top:34.1px;width:146.0px;height:14.0px;background:#2e2f31;"></div>
<svg style="left:885.0px;top:38.4px" width="3.4" height="5.4" viewBox="0 0 3.4 5.4"><path d="M0 0 V5.4 L3.4 2.7Z" fill="#c7c7c7"/></svg>
<div class="t k2" style="left:892.2px;top:35.5px;color:#e3e3e3;">워치</div>
<div class="a" style="left:878.4px;top:48.2px;width:146.0px;height:14.0px;background:#2e2f31;"></div>
<div class="a" style="left:878.4px;top:61.6px;width:146.0px;height:0.8px;background:#4a4a4a;"></div>
<svg style="left:884.0px;top:53.6px" width="5.2" height="3.4" viewBox="0 0 5.2 3.4"><path d="M0 0 H5.2 L2.6 3.4Z" fill="#c7c7c7"/></svg>
<div class="t k2" style="left:892.2px;top:49.6px;color:#e3e3e3;">중단점</div>
<div class="a" style="left:882.4px;top:66.5px;width:7.4px;height:7.4px;border:1px solid #757575;border-radius:1.3px"></div>
<div class="t k2" style="left:894.0px;top:64.6px;color:#e3e3e3;">포착되지 않은 예외에서 일시중지</div>
<div class="a" style="left:882.4px;top:78.1px;width:7.4px;height:7.4px;border:1px solid #757575;border-radius:1.3px"></div>
<div class="t k2" style="left:894.0px;top:76.2px;color:#e3e3e3;">포착된 예외에서 일시중지</div>
<div class="a" style="left:878.4px;top:90.0px;width:146.0px;height:14.0px;background:#2e2f31;"></div>
<div class="a" style="left:878.4px;top:103.4px;width:146.0px;height:0.8px;background:#4a4a4a;"></div>
<svg style="left:884.0px;top:95.4px" width="5.2" height="3.4" viewBox="0 0 5.2 3.4"><path d="M0 0 H5.2 L2.6 3.4Z" fill="#c7c7c7"/></svg>
<div class="t k2" style="left:892.2px;top:91.4px;color:#e3e3e3;">범위</div>
<div class="t k" style="left:919.2px;top:107.2px;color:#8f8f8f;font-style:italic">일시중지되지 않음</div>
<div class="a" style="left:878.4px;top:122.5px;width:146.0px;height:14.0px;background:#2e2f31;"></div>
<div class="a" style="left:878.4px;top:135.9px;width:146.0px;height:0.8px;background:#4a4a4a;"></div>
<svg style="left:884.0px;top:127.9px" width="5.2" height="3.4" viewBox="0 0 5.2 3.4"><path d="M0 0 H5.2 L2.6 3.4Z" fill="#c7c7c7"/></svg>
<div class="t k2" style="left:892.2px;top:123.9px;color:#e3e3e3;">호출 스택</div>
<div class="t k" style="left:919.2px;top:140.2px;color:#8f8f8f;font-style:italic">일시중지되지 않음</div>
<div class="a" style="left:878.4px;top:155.2px;width:146.0px;height:14.0px;background:#2e2f31;"></div>
<svg style="left:885.0px;top:159.5px" width="3.4" height="5.4" viewBox="0 0 3.4 5.4"><path d="M0 0 V5.4 L3.4 2.7Z" fill="#c7c7c7"/></svg>
<div class="t k2" style="left:892.2px;top:156.6px;color:#e3e3e3;">XHR/가져오기 중단점</div>
<div class="a" style="left:878.4px;top:169.8px;width:146.0px;height:14.0px;background:#2e2f31;"></div>
<svg style="left:885.0px;top:174.1px" width="3.4" height="5.4" viewBox="0 0 3.4 5.4"><path d="M0 0 V5.4 L3.4 2.7Z" fill="#c7c7c7"/></svg>
<div class="t k2" style="left:892.2px;top:171.2px;color:#e3e3e3;">DOM 중단점</div>
<div class="a" style="left:878.4px;top:184.0px;width:146.0px;height:14.0px;background:#2e2f31;"></div>
<svg style="left:885.0px;top:188.3px" width="3.4" height="5.4" viewBox="0 0 3.4 5.4"><path d="M0 0 V5.4 L3.4 2.7Z" fill="#c7c7c7"/></svg>
<div class="t k2" style="left:892.2px;top:185.4px;color:#e3e3e3;">전역 리스너</div>
<div class="a" style="left:878.4px;top:198.3px;width:146.0px;height:14.0px;background:#2e2f31;"></div>
<svg style="left:885.0px;top:202.6px" width="3.4" height="5.4" viewBox="0 0 3.4 5.4"><path d="M0 0 V5.4 L3.4 2.7Z" fill="#c7c7c7"/></svg>
<div class="t k2" style="left:892.2px;top:199.7px;color:#e3e3e3;">이벤트 리스너 중단점</div>
<div class="a" style="left:878.4px;top:212.8px;width:146.0px;height:14.0px;background:#2e2f31;"></div>
<svg style="left:885.0px;top:217.1px" width="3.4" height="5.4" viewBox="0 0 3.4 5.4"><path d="M0 0 V5.4 L3.4 2.7Z" fill="#c7c7c7"/></svg>
<div class="t k2" style="left:892.2px;top:214.2px;color:#e3e3e3;">CSP 위반 중단점</div>
<div class="a" style="left:409.7px;top:459.7px;width:614.3px;height:17.8px;background:#3c3c3c;"></div>
<div class="a" style="left:410.0px;top:459.6px;width:614.0px;height:0.8px;background:#525252;"></div>
<div class="a" style="left:410.0px;top:477.1px;width:614.0px;height:0.8px;background:#525252;"></div>
<div class="a" style="left:410.0px;top:494.6px;width:614.0px;height:0.8px;background:#4a4a4a;"></div>
<svg style="left:418.8px;top:463.6px" width="3" height="10" viewBox="0 0 3 10"><circle cx="1.5" cy="2.1" r="0.8" fill="#c7c7c7"/><circle cx="1.5" cy="5" r="0.8" fill="#c7c7c7"/><circle cx="1.5" cy="7.9" r="0.8" fill="#c7c7c7"/></svg>
<div class="t k" style="left:434.0px;top:463.7px;color:#a8c7fa;">콘솔</div>
<div class="a" style="left:428.6px;top:475.1px;width:27.9px;height:2.1px;background:#a4cbef;border-radius:1.2px 1.2px 0 0"></div>
<div class="t k" style="left:463.0px;top:463.7px;color:#c7c7c7;">AI 어시스턴스</div>
<div class="t k" style="left:532.5px;top:463.7px;color:#c7c7c7;">새로운 소식</div>
<div class="t k" style="left:593.6px;top:463.7px;color:#c7c7c7;">문제</div>
<div class="t k2" style="left:629.3px;top:463.7px;color:#c7c7c7;">네트워크 요청 차단</div>
<svg style="left:1010.0px;top:465.6px" width="7" height="7" viewBox="0 0 7 7"><path d="M0.6 0.6 L6.4 6.4 M6.4 0.6 L0.6 6.4" stroke="#c7c7c7" stroke-width="1.05"/></svg>
<svg style="left:415.7px;top:482.4px" width="9.4" height="9" viewBox="0 0 9.4 9"><rect x="0.5" y="0.7" width="8.2" height="7.2" rx="0.8" fill="none" stroke="#c7c7c7" stroke-width="0.95"/><path d="M3.3 0.7V7.9" stroke="#c7c7c7" stroke-width="0.9"/><path d="M5 2.7 L7 4.3 L5 5.9Z" fill="#c7c7c7"/></svg>
<svg style="left:433.6px;top:481.8px" width="10" height="10" viewBox="0 0 10 10"><circle cx="5" cy="5" r="4.1" fill="none" stroke="#c7c7c7" stroke-width="0.95"/><path d="M2.2 7.9 L7.9 2.2" stroke="#c7c7c7" stroke-width="0.95"/></svg>
<div class="a" style="left:450.5px;top:481.5px;width:0.8px;height:10.5px;background:#5a5a5a;"></div>
<div class="t l" style="left:458.8px;top:480.8px;color:#e3e3e3;">top</div>
<svg style="left:472.8px;top:485.4px" width="5.4" height="3.4" viewBox="0 0 5.4 3.4"><path d="M0 0 H5.4 L2.7 3.4Z" fill="#c7c7c7"/></svg>
<div class="a" style="left:486.1px;top:481.5px;width:0.8px;height:10.5px;background:#5a5a5a;"></div>
<svg style="left:491.6px;top:482.6px" width="13.4" height="8.4" viewBox="0 0 13.4 8.4"><path d="M0.6 4.2 Q3.4 0.5 6.7 0.5 Q10 0.5 12.8 4.2 Q10 7.9 6.7 7.9 Q3.4 7.9 0.6 4.2Z" fill="none" stroke="#c7c7c7" stroke-width="0.95"/><circle cx="6.7" cy="4.2" r="1.9" fill="none" stroke="#c7c7c7" stroke-width="0.95"/></svg>
<div class="a" style="left:510.0px;top:481.5px;width:0.8px;height:10.5px;background:#5a5a5a;"></div>
<div class="a" style="left:515.3px;top:480.1px;width:385.0px;height:13.0px;background:#3a3a3a;border-radius:6.5px"></div>
<svg style="left:522.4px;top:483.4px" width="6" height="7" viewBox="0 0 6 7"><path d="M0.4 0.5 H5.6 L3.7 3.4 V6.4 H2.3 V3.4Z" fill="none" stroke="#c7c7c7" stroke-width="0.9"/></svg>
<div class="t k" style="left:534.4px;top:481.0px;color:#b5b5b5;">필터</div>
<div class="t k" style="left:908.0px;top:481.0px;color:#e3e3e3;">기본 수준</div>
<svg style="left:944.4px;top:485.4px" width="5.4" height="3.4" viewBox="0 0 5.4 3.4"><path d="M0 0 H5.4 L2.7 3.4Z" fill="#c7c7c7"/></svg>
<div class="a" style="left:956.6px;top:481.5px;width:0.8px;height:10.5px;background:#5a5a5a;"></div>
<div class="t k" style="left:961.6px;top:481.0px;color:#e3e3e3;">문제 없음</div>
<div class="a" style="left:999.8px;top:481.5px;width:0.8px;height:10.5px;background:#5a5a5a;"></div>
<svg style="left:1006.8px;top:481.6px" width="10" height="10" viewBox="0 0 10 10"><g fill="none" stroke="#c7c7c7" stroke-width="0.95"><circle cx="5" cy="5" r="1.5"/><path d="M5 0.9 L6.3 1.3 L7.2 0.9 L8.6 2.2 L8.3 3.3 L9.1 4.3 V5.7 L8.3 6.7 L8.6 7.8 L7.2 9.1 L6.3 8.7 L5 9.1 L3.7 8.7 L2.8 9.1 L1.4 7.8 L1.7 6.7 L0.9 5.7 V4.3 L1.7 3.3 L1.4 2.2 L2.8 0.9 L3.7 1.3Z"/></g></svg>
<div class="t m" style="left:427.9px;top:498.3px;color:#e3e3e3;">Extension keyboard shortcuts loaded. Available shortcuts:</div>
<div class="t m" style="left:905.6px;top:498.3px;"><span class="lnk">keyboard-shortcuts.js:214</span></div>
<div class="t m" style="left:427.9px;top:511.9px;color:#e3e3e3;">- Alt+C: Toggle Copy Mode</div>
<div class="t m" style="left:905.6px;top:511.9px;"><span class="lnk">keyboard-shortcuts.js:215</span></div>
<div class="t m" style="left:427.9px;top:526.3px;color:#e3e3e3;">- Alt+A: Toggle Absolute Mode</div>
<div class="t m" style="left:905.6px;top:526.3px;"><span class="lnk">keyboard-shortcuts.js:216</span></div>
<div class="t m" style="left:427.9px;top:540.0px;color:#e3e3e3;">- Alt+O: Trigger OCR Mode</div>
<div class="t m" style="left:905.6px;top:540.0px;"><span class="lnk">keyboard-shortcuts.js:217</span></div>
<div class="a" style="left:410.0px;top:509.7px;width:595.0px;height:0.8px;background:#454545;"></div>
<div class="a" style="left:410.0px;top:524.2px;width:595.0px;height:0.8px;background:#454545;"></div>
<div class="a" style="left:410.0px;top:537.8px;width:595.0px;height:0.8px;background:#454545;"></div>
<svg style="left:417.4px;top:557.4px" width="4" height="6" viewBox="0 0 4 6"><path d="M0.6 0.6 L3.2 3 L0.6 5.4" fill="none" stroke="#5e9bf0" stroke-width="1"/></svg>
</body></html>
